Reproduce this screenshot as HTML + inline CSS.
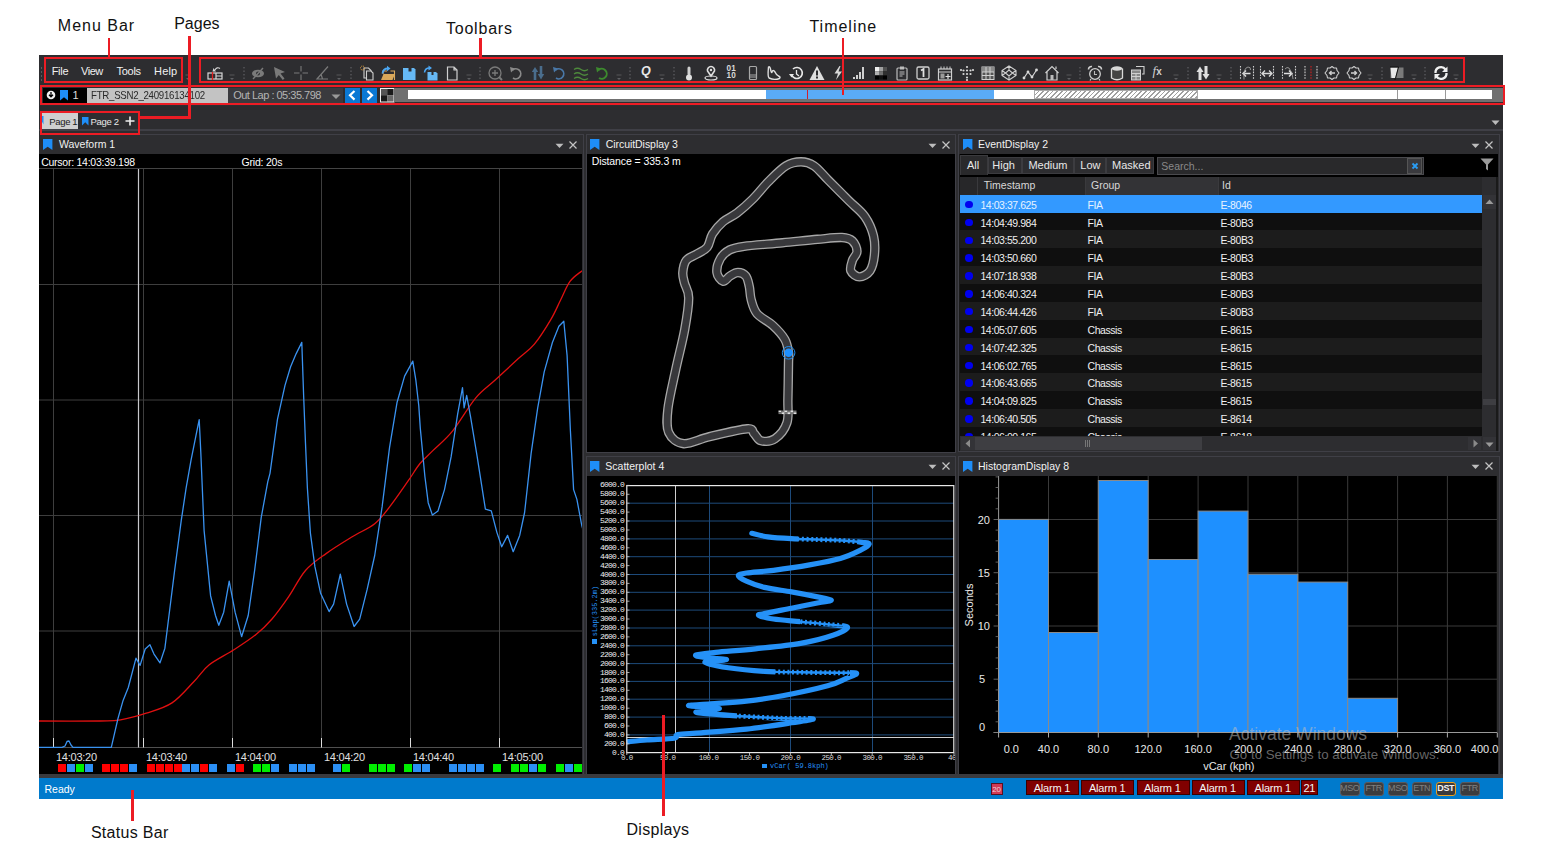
<!DOCTYPE html><html><head><meta charset="utf-8"><style>
html,body{margin:0;padding:0}
body{width:1551px;height:857px;position:relative;overflow:hidden;background:#fff;font-family:"Liberation Sans",sans-serif}
.t{position:absolute;white-space:nowrap}
.r{position:absolute;box-sizing:border-box}
svg{position:absolute;overflow:visible}
</style></head><body>
<div class="r" style="left:39.0px;top:55.0px;width:1464.0px;height:744.0px;background:#2d2d30"></div>
<div class="r" style="left:40.5px;top:67.0px;width:1.5px;height:1.5px;background:#5a5a5e"></div>
<div class="r" style="left:40.5px;top:71.0px;width:1.5px;height:1.5px;background:#5a5a5e"></div>
<div class="r" style="left:40.5px;top:75.0px;width:1.5px;height:1.5px;background:#5a5a5e"></div>
<div class="r" style="left:40.5px;top:79.0px;width:1.5px;height:1.5px;background:#5a5a5e"></div>
<div class="t" style="left:51.7px;top:65.9px;font-size:11px;line-height:11px;color:#f1f1f1;letter-spacing:-0.3px">File</div>
<div class="t" style="left:81.1px;top:65.9px;font-size:11px;line-height:11px;color:#f1f1f1;letter-spacing:-0.5px">View</div>
<div class="t" style="left:116.6px;top:65.9px;font-size:11px;line-height:11px;color:#f1f1f1;letter-spacing:-0.3px">Tools</div>
<div class="t" style="left:154.0px;top:65.9px;font-size:11px;line-height:11px;color:#f1f1f1;letter-spacing:0.2px">Help</div>
<svg style="left:207.0px;top:65.0px" width="16" height="16" viewBox="0 0 16 16"><rect x="1" y="8" width="14" height="6" fill="none" stroke="#d8d8d8" stroke-width="1.2"/><path d="M9,8 V14 M9,11 H15" stroke="#d8d8d8" stroke-width="1.2"/><path d="M5.5,7 V15" stroke="#e02020" stroke-width="1.3"/><path d="M8,5 Q10,1.5 13,3.5" fill="none" stroke="#d8d8d8" stroke-width="1.1"/><path d="M6.5,3 L9,6.5 L5.5,6.5 Z" fill="#d8d8d8"/></svg>
<svg style="left:223.6px;top:65.0px" width="16" height="16" viewBox="0 0 16 16"><path d="M5.5,10 H10.5" stroke="#5f5f62" stroke-width="0.8"/><path d="M6,13 H10 L8,15 Z" fill="#5f5f62"/></svg>
<svg style="left:235.5px;top:65.0px" width="16" height="16" viewBox="0 0 16 16"><rect x="7.4" y="2" width="1.2" height="1.4" fill="#606064"/><rect x="7.4" y="5.5" width="1.2" height="1.4" fill="#606064"/><rect x="7.4" y="9" width="1.2" height="1.4" fill="#606064"/><rect x="7.4" y="12.5" width="1.2" height="1.4" fill="#606064"/></svg>
<svg style="left:250.4px;top:65.0px" width="16" height="16" viewBox="0 0 16 16"><ellipse cx="8" cy="8.5" rx="6" ry="3.8" fill="#7a7a7a"/><ellipse cx="8" cy="8.5" rx="2" ry="2" fill="#2d2d30"/><path d="M3,14 L13,3" stroke="#7a7a7a" stroke-width="1.4"/></svg>
<svg style="left:272.1px;top:65.0px" width="16" height="16" viewBox="0 0 16 16"><path d="M2,2 L13,7 L8.5,8.5 L12.5,13.5 L10.8,15 L6.8,10 L4,13.5 Z" fill="#7a7a7a"/></svg>
<svg style="left:293.3px;top:65.0px" width="16" height="16" viewBox="0 0 16 16"><path d="M8,1 V15 M1,8 H15" stroke="#7a7a7a" stroke-width="1.1"/><rect x="6.5" y="6.5" width="3" height="3" fill="#2d2d30"/></svg>
<svg style="left:314.9px;top:65.0px" width="16" height="16" viewBox="0 0 16 16"><path d="M13,1.5 L2,14 H13 M6,9 L7.5,14" fill="none" stroke="#7a7a7a" stroke-width="1.2"/></svg>
<svg style="left:331.4px;top:65.0px" width="16" height="16" viewBox="0 0 16 16"><path d="M5.5,10 H10.5" stroke="#5f5f62" stroke-width="0.8"/><path d="M6,13 H10 L8,15 Z" fill="#5f5f62"/></svg>
<svg style="left:342.8px;top:65.0px" width="16" height="16" viewBox="0 0 16 16"><rect x="7.4" y="2" width="1.2" height="1.4" fill="#606064"/><rect x="7.4" y="5.5" width="1.2" height="1.4" fill="#606064"/><rect x="7.4" y="9" width="1.2" height="1.4" fill="#606064"/><rect x="7.4" y="12.5" width="1.2" height="1.4" fill="#606064"/></svg>
<svg style="left:358.5px;top:65.0px" width="16" height="16" viewBox="0 0 16 16"><path d="M5,3 H9.5 L12,5.5 V13 H5 Z" fill="none" stroke="#cfcfcf" stroke-width="1.1"/><path d="M7.5,6 H12 L14,8 V15 H7.5 Z" fill="#2d2d30" stroke="#cfcfcf" stroke-width="1.1"/><circle cx="3.5" cy="3" r="2" fill="none" stroke="#e0a040" stroke-width="1" stroke-dasharray="1 0.8"/></svg>
<svg style="left:379.7px;top:65.0px" width="16" height="16" viewBox="0 0 16 16"><path d="M1,15 L3.5,9 H15 L12.5,15 Z" fill="#d9a85a"/><path d="M3,9 V6 H7 M10.5,6 H14.5 V15" fill="none" stroke="#d9a85a" stroke-width="1.1"/><path d="M2.5,8.5 Q3,3.5 8,3.5" fill="none" stroke="#4ba6f2" stroke-width="1.8"/><path d="M7,0.8 L10.5,3.5 L7,6.2 Z" fill="#4ba6f2"/></svg>
<svg style="left:400.8px;top:65.0px" width="16" height="16" viewBox="0 0 16 16"><path d="M2,3 H13 L14.5,4.5 V15 H2 Z" fill="#66b8f4"/><rect x="7.5" y="3" width="3" height="3.5" fill="#2d2d30"/></svg>
<svg style="left:422.5px;top:65.0px" width="16" height="16" viewBox="0 0 16 16"><path d="M4.5,7 H13 L14.5,8.5 V15.5 H4.5 Z" fill="#66b8f4"/><rect x="8.5" y="7" width="2" height="3" fill="#2d2d30"/><path d="M1.5,7.5 Q2,3 6.5,3" fill="none" stroke="#4ba6f2" stroke-width="1.6"/><path d="M5.5,0.5 L9,3 L5.5,5.5 Z" fill="#4ba6f2"/></svg>
<svg style="left:443.6px;top:65.0px" width="16" height="16" viewBox="0 0 16 16"><path d="M3.5,2 H10 L13,5 V15 H3.5 Z M10,2 V5 H13" fill="none" stroke="#cfcfcf" stroke-width="1.2"/></svg>
<svg style="left:460.7px;top:65.0px" width="16" height="16" viewBox="0 0 16 16"><path d="M5.5,10 H10.5" stroke="#5f5f62" stroke-width="0.8"/><path d="M6,13 H10 L8,15 Z" fill="#5f5f62"/></svg>
<svg style="left:472.0px;top:65.0px" width="16" height="16" viewBox="0 0 16 16"><rect x="7.4" y="2" width="1.2" height="1.4" fill="#606064"/><rect x="7.4" y="5.5" width="1.2" height="1.4" fill="#606064"/><rect x="7.4" y="9" width="1.2" height="1.4" fill="#606064"/><rect x="7.4" y="12.5" width="1.2" height="1.4" fill="#606064"/></svg>
<svg style="left:487.0px;top:65.0px" width="16" height="16" viewBox="0 0 16 16"><circle cx="8" cy="8" r="6" fill="none" stroke="#7a7a7a" stroke-width="1.3"/><path d="M8,5 V11 M5,8 H11" stroke="#7a7a7a" stroke-width="1.3"/><path d="M12,12 L15,15" stroke="#7a7a7a" stroke-width="2"/></svg>
<svg style="left:508.4px;top:65.0px" width="16" height="16" viewBox="0 0 16 16"><path d="M4.5,5 A5,5 0 1 1 5,13" fill="none" stroke="#8a8a8a" stroke-width="1.7"/><path d="M2,2 L7,3.5 L3,7.5 Z" fill="#8a8a8a"/></svg>
<svg style="left:530.0px;top:65.0px" width="16" height="16" viewBox="0 0 16 16"><path d="M5,15 V6" stroke="#4a6d8c" stroke-width="2.6"/><path d="M1.8,7 L5,2 L8.2,7 Z" fill="#4a6d8c"/><path d="M11,1 V10" stroke="#4a6d8c" stroke-width="2.6"/><path d="M7.8,9 L11,14.5 L14.2,9 Z" fill="#4a6d8c"/></svg>
<svg style="left:551.2px;top:65.0px" width="16" height="16" viewBox="0 0 16 16"><path d="M4.5,5 A5,5 0 1 1 5,13" fill="none" stroke="#4a78a8" stroke-width="1.7"/><path d="M2,2 L7,3.5 L3,7.5 Z" fill="#4a78a8"/></svg>
<svg style="left:572.9px;top:65.0px" width="16" height="16" viewBox="0 0 16 16"><path d="M1,4.5 Q4.5,2 8,4.5 T15,4.5 M1,9 Q4.5,6.5 8,9 T15,9 M1,13.5 Q4.5,11 8,13.5 T15,13.5" fill="none" stroke="#4e8a3c" stroke-width="1.3"/></svg>
<svg style="left:594.0px;top:65.0px" width="16" height="16" viewBox="0 0 16 16"><path d="M4.5,5 A5,5 0 1 1 5,13" fill="none" stroke="#3d8a2e" stroke-width="1.9"/><path d="M2,2 L7,3.5 L3,7.5 Z" fill="#3d8a2e"/></svg>
<svg style="left:610.5px;top:65.0px" width="16" height="16" viewBox="0 0 16 16"><path d="M5.5,10 H10.5" stroke="#5f5f62" stroke-width="0.8"/><path d="M6,13 H10 L8,15 Z" fill="#5f5f62"/></svg>
<svg style="left:622.4px;top:65.0px" width="16" height="16" viewBox="0 0 16 16"><rect x="7.4" y="2" width="1.2" height="1.4" fill="#606064"/><rect x="7.4" y="5.5" width="1.2" height="1.4" fill="#606064"/><rect x="7.4" y="9" width="1.2" height="1.4" fill="#606064"/><rect x="7.4" y="12.5" width="1.2" height="1.4" fill="#606064"/></svg>
<div class="t" style="left:641px;top:65px;font-size:12.5px;line-height:12.5px;color:#e8e8e8;font-weight:bold;font-style:italic;font-family:'Liberation Sans',sans-serif">Q</div>
<svg style="left:653.9px;top:65.0px" width="16" height="16" viewBox="0 0 16 16"><path d="M5.5,10 H10.5" stroke="#5f5f62" stroke-width="0.8"/><path d="M6,13 H10 L8,15 Z" fill="#5f5f62"/></svg>
<svg style="left:666.0px;top:65.0px" width="16" height="16" viewBox="0 0 16 16"><rect x="7.4" y="2" width="1.2" height="1.4" fill="#606064"/><rect x="7.4" y="5.5" width="1.2" height="1.4" fill="#606064"/><rect x="7.4" y="9" width="1.2" height="1.4" fill="#606064"/><rect x="7.4" y="12.5" width="1.2" height="1.4" fill="#606064"/></svg>
<svg style="left:680.9px;top:65.0px" width="16" height="16" viewBox="0 0 16 16"><rect x="6.5" y="1.5" width="3" height="9" rx="1.5" fill="#d0d0d0"/><circle cx="8" cy="12.5" r="3" fill="#e0e0e0"/></svg>
<svg style="left:702.6px;top:65.0px" width="16" height="16" viewBox="0 0 16 16"><path d="M8,11 L4.5,6 A3.6,3.6 0 1 1 11.5,6 Z" fill="none" stroke="#e0e0e0" stroke-width="1.6"/><circle cx="8" cy="5" r="1.2" fill="#e0e0e0"/><ellipse cx="8" cy="13" rx="6" ry="2" fill="none" stroke="#e0e0e0" stroke-width="1.2"/></svg>
<div class="t" style="left:726.6px;top:66px;font-size:8.2px;line-height:6.8px;color:#d8d8d8;font-weight:bold;letter-spacing:0.2px">01<br>10</div>
<svg style="left:744.9px;top:65.0px" width="16" height="16" viewBox="0 0 16 16"><rect x="4.5" y="1.5" width="7" height="13" rx="1" fill="none" stroke="#a8a8a8" stroke-width="1.2"/><path d="M5,10 H11 M5,12 H11" stroke="#a8a8a8" stroke-width="1.2"/></svg>
<svg style="left:766.0px;top:65.0px" width="16" height="16" viewBox="0 0 16 16"><path d="M2.5,2 Q1.5,12 3,13 Q8,15.5 13.5,13.5 Q15,12 12.5,11 Q10,9.5 9,7 Q7,4 6,7 Q5.5,9 4.5,4 Q3.8,1 2.5,2 Z" fill="none" stroke="#e0e0e0" stroke-width="1.4"/></svg>
<svg style="left:788.2px;top:65.0px" width="16" height="16" viewBox="0 0 16 16"><path d="M3.5,9.5 A5.5,5.5 0 1 0 5,4" fill="none" stroke="#e8e8e8" stroke-width="1.7"/><path d="M1,9 L6,9 L3.5,12.5 Z" fill="#e8e8e8"/><path d="M8.5,5 V9 L11,11" fill="none" stroke="#e8e8e8" stroke-width="1.3"/></svg>
<svg style="left:808.9px;top:65.0px" width="16" height="16" viewBox="0 0 16 16"><path d="M8,1 L15.5,15 H0.5 Z" fill="#dedede"/><rect x="7" y="5.5" width="2" height="5" fill="#2d2d30"/><rect x="7" y="11.5" width="2" height="2" fill="#2d2d30"/></svg>
<svg style="left:830.2px;top:65.0px" width="16" height="16" viewBox="0 0 16 16"><path d="M9.5,1 L4.5,8.5 H8 L6,15 L12,6.5 H8.5 L10.5,1 Z" fill="#d8d8d8"/></svg>
<svg style="left:851.4px;top:65.0px" width="16" height="16" viewBox="0 0 16 16"><rect x="2" y="12" width="2" height="2" fill="#d0d0d0"/><rect x="5" y="10" width="2" height="4" fill="#d0d0d0"/><rect x="8" y="7" width="2" height="7" fill="#d0d0d0"/><rect x="11" y="2" width="2" height="12" fill="#d0d0d0"/></svg>
<svg style="left:873.0px;top:65.0px" width="16" height="16" viewBox="0 0 16 16"><rect x="2" y="2.0" width="4" height="4.2" fill="#f0f0f0"/><rect x="6" y="2.0" width="4" height="4.2" fill="#a0a0a0"/><rect x="10" y="2.0" width="4" height="4.2" fill="#505050"/><rect x="2" y="6.2" width="4" height="4.2" fill="#b0b0b0"/><rect x="6" y="6.2" width="4" height="4.2" fill="#707070"/><rect x="10" y="6.2" width="4" height="4.2" fill="#303030"/><rect x="2" y="10.4" width="4" height="4.2" fill="#000"/><rect x="6" y="10.4" width="4" height="4.2" fill="#101010"/><rect x="10" y="10.4" width="4" height="4.2" fill="#000"/></svg>
<svg style="left:894.2px;top:65.0px" width="16" height="16" viewBox="0 0 16 16"><rect x="3" y="3" width="10" height="12" rx="1" fill="none" stroke="#bcbcbc" stroke-width="1.2"/><rect x="6" y="1.5" width="4" height="3" fill="#bcbcbc"/><path d="M5.5,7 H10.5 M5.5,9 H10.5 M5.5,11 H8.5" stroke="#bcbcbc" stroke-width="1"/></svg>
<svg style="left:915.4px;top:65.0px" width="16" height="16" viewBox="0 0 16 16"><rect x="2" y="2" width="12" height="12" rx="1.5" fill="none" stroke="#cfcfcf" stroke-width="1.3"/><path d="M6,5.5 L8.5,4 V12" fill="none" stroke="#e0e0e0" stroke-width="1.8"/></svg>
<svg style="left:937.0px;top:65.0px" width="16" height="16" viewBox="0 0 16 16"><rect x="1.5" y="4" width="13" height="11" fill="none" stroke="#cfcfcf" stroke-width="1.2"/><path d="M1.5,7 H14.5" stroke="#cfcfcf" stroke-width="1"/><path d="M4,1.5 V4 M7,1.5 V4 M10,1.5 V4 M13,1.5 V4" stroke="#cfcfcf" stroke-width="1"/><rect x="3.5" y="8.5" width="4" height="5" fill="#9a9a9a"/><path d="M11,9 V14 M8.5,11.5 H13.5" stroke="#e0e0e0" stroke-width="1.2"/></svg>
<svg style="left:958.7px;top:65.0px" width="16" height="16" viewBox="0 0 16 16"><circle cx="8" cy="2" r="1.1" fill="#d8d8d8"/><circle cx="8" cy="5.5" r="1.1" fill="#d8d8d8"/><circle cx="8" cy="9" r="1.1" fill="#d8d8d8"/><circle cx="8" cy="12.5" r="1.1" fill="#d8d8d8"/><circle cx="8" cy="15" r="1.1" fill="#d8d8d8"/><circle cx="4.5" cy="5.5" r="1.1" fill="#d8d8d8"/><circle cx="11.5" cy="5.5" r="1.1" fill="#d8d8d8"/><circle cx="2" cy="5" r="1.1" fill="#d8d8d8"/><circle cx="14" cy="5" r="1.1" fill="#d8d8d8"/><circle cx="4.5" cy="9" r="1.1" fill="#d8d8d8"/><circle cx="11.5" cy="9" r="1.1" fill="#d8d8d8"/></svg>
<svg style="left:979.5px;top:65.0px" width="16" height="16" viewBox="0 0 16 16"><rect x="2" y="2" width="12" height="12.5" fill="#555" stroke="#cfcfcf" stroke-width="1"/><rect x="2" y="2" width="12" height="5" fill="#8a8a8a"/><path d="M6,2 V14.5 M10,2 V14.5 M2,7 H14 M2,10.5 H14" stroke="#d0d0d0" stroke-width="1"/></svg>
<svg style="left:1001.2px;top:65.0px" width="16" height="16" viewBox="0 0 16 16"><path d="M8,1 L15,5.5 V10.5 L8,15 L1,10.5 V5.5 Z M8,5 L11.5,8 L8,11 L4.5,8 Z M8,1 V5 M15,5.5 L11.5,8 M15,10.5 L11.5,8 M8,15 V11 M1,10.5 L4.5,8 M1,5.5 L4.5,8" fill="none" stroke="#cfcfcf" stroke-width="1.1"/></svg>
<svg style="left:1022.4px;top:65.0px" width="16" height="16" viewBox="0 0 16 16"><path d="M2,13 L6,7 L10,12 L14.5,5" fill="none" stroke="#d8d8d8" stroke-width="1.1"/><circle cx="2" cy="13" r="1.4" fill="#d8d8d8"/><circle cx="6" cy="7" r="1.4" fill="#d8d8d8"/><circle cx="10" cy="12" r="1.4" fill="#d8d8d8"/><circle cx="14.5" cy="5" r="1.4" fill="#d8d8d8"/></svg>
<svg style="left:1044.0px;top:65.0px" width="16" height="16" viewBox="0 0 16 16"><path d="M1.5,8 L8,1.5 L14.5,8 M3,7 V15 H13 V7 M12,4 V1.5" fill="none" stroke="#cfcfcf" stroke-width="1.2"/><rect x="6.5" y="10" width="3" height="5" fill="#bbb"/></svg>
<svg style="left:1060.6px;top:65.0px" width="16" height="16" viewBox="0 0 16 16"><path d="M5.5,10 H10.5" stroke="#5f5f62" stroke-width="0.8"/><path d="M6,13 H10 L8,15 Z" fill="#5f5f62"/></svg>
<svg style="left:1072.2px;top:65.0px" width="16" height="16" viewBox="0 0 16 16"><rect x="7.4" y="2" width="1.2" height="1.4" fill="#606064"/><rect x="7.4" y="5.5" width="1.2" height="1.4" fill="#606064"/><rect x="7.4" y="9" width="1.2" height="1.4" fill="#606064"/><rect x="7.4" y="12.5" width="1.2" height="1.4" fill="#606064"/></svg>
<svg style="left:1087.4px;top:65.0px" width="16" height="16" viewBox="0 0 16 16"><circle cx="8" cy="9" r="5.3" fill="none" stroke="#d0d0d0" stroke-width="1.3"/><path d="M1.5,4.5 A3,3 0 0 1 5,1.5 M11,1.5 A3,3 0 0 1 14.5,4.5" fill="none" stroke="#d0d0d0" stroke-width="1.6"/><path d="M7.5,6 V9.5 H10" fill="none" stroke="#bbb" stroke-width="1.1"/><path d="M4,14 L3,15.5 M12,14 L13,15.5" stroke="#d0d0d0" stroke-width="1.2"/></svg>
<svg style="left:1108.5px;top:65.0px" width="16" height="16" viewBox="0 0 16 16"><path d="M2.5,3.5 V13 Q8,16.5 13.5,13 V3.5" fill="#444" stroke="#d8d8d8" stroke-width="1.3"/><ellipse cx="8" cy="3.5" rx="5.5" ry="2.2" fill="#d8d8d8"/></svg>
<svg style="left:1129.9px;top:65.0px" width="16" height="16" viewBox="0 0 16 16"><path d="M6,1.5 H14 V9 H12" fill="none" stroke="#d0d0d0" stroke-width="1.1"/><rect x="1.5" y="5" width="9" height="10" fill="#888" stroke="#d0d0d0" stroke-width="1"/><path d="M1.5,8.5 H10.5 M1.5,11.5 H10.5 M6,8.5 V15" stroke="#d0d0d0" stroke-width="1"/></svg>
<div class="t" style="left:1152.5px;top:64px;font-size:13px;line-height:13px;color:#d0d0d0;font-style:italic;font-family:'Liberation Serif',serif">f<span style="font-size:10px;font-style:normal;font-family:'Liberation Sans',sans-serif;font-weight:bold">x</span></div>
<svg style="left:1167.6px;top:65.0px" width="16" height="16" viewBox="0 0 16 16"><path d="M5.5,10 H10.5" stroke="#5f5f62" stroke-width="0.8"/><path d="M6,13 H10 L8,15 Z" fill="#5f5f62"/></svg>
<svg style="left:1180.0px;top:65.0px" width="16" height="16" viewBox="0 0 16 16"><rect x="7.4" y="2" width="1.2" height="1.4" fill="#606064"/><rect x="7.4" y="5.5" width="1.2" height="1.4" fill="#606064"/><rect x="7.4" y="9" width="1.2" height="1.4" fill="#606064"/><rect x="7.4" y="12.5" width="1.2" height="1.4" fill="#606064"/></svg>
<svg style="left:1194.9px;top:65.0px" width="16" height="16" viewBox="0 0 16 16"><path d="M5,15 V6" stroke="#e0e0e0" stroke-width="3"/><path d="M1.5,7 L5,1.5 L8.5,7 Z" fill="#e0e0e0"/><path d="M11,1 V10" stroke="#e0e0e0" stroke-width="3"/><path d="M7.5,9 L11,14.5 L14.5,9 Z" fill="#e0e0e0"/></svg>
<svg style="left:1211.4px;top:65.0px" width="16" height="16" viewBox="0 0 16 16"><path d="M5.5,10 H10.5" stroke="#5f5f62" stroke-width="0.8"/><path d="M6,13 H10 L8,15 Z" fill="#5f5f62"/></svg>
<svg style="left:1223.3px;top:65.0px" width="16" height="16" viewBox="0 0 16 16"><rect x="7.4" y="2" width="1.2" height="1.4" fill="#606064"/><rect x="7.4" y="5.5" width="1.2" height="1.4" fill="#606064"/><rect x="7.4" y="9" width="1.2" height="1.4" fill="#606064"/><rect x="7.4" y="12.5" width="1.2" height="1.4" fill="#606064"/></svg>
<svg style="left:1238.8px;top:65.0px" width="16" height="16" viewBox="0 0 16 16"><path d="M1.5,1 V15 M14.5,1 V15" stroke="#d0d0d0" stroke-width="1.1" stroke-dasharray="1.6 1.2"/><path d="M4,8.5 H11.5 M7,5.5 L4,8.5 L7,11.5" fill="none" stroke="#e0e0e0" stroke-width="1.5"/><path d="M5,14.5 Q4,3 9,2 Q12,2 11.5,5" fill="none" stroke="#aaa" stroke-width="0.8"/></svg>
<svg style="left:1259.4px;top:65.0px" width="16" height="16" viewBox="0 0 16 16"><path d="M1.5,1 V15 M14.5,1 V15" stroke="#d0d0d0" stroke-width="1.1" stroke-dasharray="1.6 1.2"/><path d="M3,8.5 H13 M6,5.5 L3,8.5 L6,11.5 M10,5.5 L13,8.5 L10,11.5" fill="none" stroke="#d8d8d8" stroke-width="1.3"/></svg>
<svg style="left:1281.2px;top:65.0px" width="16" height="16" viewBox="0 0 16 16"><path d="M1.5,1 V15 M14.5,1 V15" stroke="#d0d0d0" stroke-width="1.1" stroke-dasharray="1.6 1.2"/><path d="M3,8.5 H11 M8,5.5 L11,8.5 L8,11.5" fill="none" stroke="#e0e0e0" stroke-width="1.5"/><path d="M4,4 Q6,1.5 8,3 Q12,8 12,14" fill="none" stroke="#aaa" stroke-width="0.8"/></svg>
<svg style="left:1302.6px;top:65.0px" width="16" height="16" viewBox="0 0 16 16"><path d="M2,1 V15 M14,1 V15" stroke="#d0d0d0" stroke-width="1.1" stroke-dasharray="1.6 1.2"/><path d="M8,1 V15" stroke="#d02020" stroke-width="1.1" stroke-dasharray="1.6 1.2"/></svg>
<svg style="left:1323.5px;top:65.0px" width="16" height="16" viewBox="0 0 16 16"><path d="M8,1.5 L10,3 L12.5,3 L13,5.5 L15,8 L13,10.5 L12.5,13 L10,13 L8,14.5 L6,13 L3.5,13 L3,10.5 L1,8 L3,5.5 L3.5,3 L6,3 Z" fill="none" stroke="#cfcfcf" stroke-width="1.1" stroke-linejoin="round"/><path d="M11,8 H5.5 M7.5,6 L5.5,8 L7.5,10" fill="none" stroke="#cfcfcf" stroke-width="1.4"/></svg>
<svg style="left:1345.5px;top:65.0px" width="16" height="16" viewBox="0 0 16 16"><path d="M8,1.5 L10,3 L12.5,3 L13,5.5 L15,8 L13,10.5 L12.5,13 L10,13 L8,14.5 L6,13 L3.5,13 L3,10.5 L1,8 L3,5.5 L3.5,3 L6,3 Z" fill="none" stroke="#cfcfcf" stroke-width="1.1" stroke-linejoin="round"/><path d="M5,8 H10.5 M8.5,6 L10.5,8 L8.5,10" fill="none" stroke="#cfcfcf" stroke-width="1.4"/></svg>
<svg style="left:1362.0px;top:65.0px" width="16" height="16" viewBox="0 0 16 16"><path d="M5.5,10 H10.5" stroke="#5f5f62" stroke-width="0.8"/><path d="M6,13 H10 L8,15 Z" fill="#5f5f62"/></svg>
<svg style="left:1373.7px;top:65.0px" width="16" height="16" viewBox="0 0 16 16"><rect x="7.4" y="2" width="1.2" height="1.4" fill="#606064"/><rect x="7.4" y="5.5" width="1.2" height="1.4" fill="#606064"/><rect x="7.4" y="9" width="1.2" height="1.4" fill="#606064"/><rect x="7.4" y="12.5" width="1.2" height="1.4" fill="#606064"/></svg>
<svg style="left:1389.0px;top:65.0px" width="16" height="16" viewBox="0 0 16 16"><rect x="1.5" y="2.5" width="13" height="10.5" fill="#7a7a7a"/><path d="M1.5,2.5 H9 L6,13 H2.5 Z" fill="#e8e8e8"/><path d="M1,2 H9.5 L6.5,13.5 M6,13.5 V15" fill="none" stroke="#111" stroke-width="1"/></svg>
<svg style="left:1405.5px;top:65.0px" width="16" height="16" viewBox="0 0 16 16"><path d="M5.5,10 H10.5" stroke="#5f5f62" stroke-width="0.8"/><path d="M6,13 H10 L8,15 Z" fill="#5f5f62"/></svg>
<svg style="left:1417.2px;top:65.0px" width="16" height="16" viewBox="0 0 16 16"><rect x="7.4" y="2" width="1.2" height="1.4" fill="#606064"/><rect x="7.4" y="5.5" width="1.2" height="1.4" fill="#606064"/><rect x="7.4" y="9" width="1.2" height="1.4" fill="#606064"/><rect x="7.4" y="12.5" width="1.2" height="1.4" fill="#606064"/></svg>
<svg style="left:1432.5px;top:65.0px" width="16" height="16" viewBox="0 0 16 16"><path d="M2.5,8 A5.5,5.5 0 0 1 12.5,4.5" fill="none" stroke="#f0f0f0" stroke-width="2.3"/><path d="M14.5,1.5 V7 H9 Z" fill="#f0f0f0"/><path d="M13.5,8 A5.5,5.5 0 0 1 3.5,11.5" fill="none" stroke="#f0f0f0" stroke-width="2.3"/><path d="M1.5,14.5 V9 H7 Z" fill="#f0f0f0"/></svg>
<svg style="left:1448.4px;top:65.0px" width="16" height="16" viewBox="0 0 16 16"><path d="M5.5,10 H10.5" stroke="#5f5f62" stroke-width="0.8"/><path d="M6,13 H10 L8,15 Z" fill="#5f5f62"/></svg>
<svg style="left:179.5px;top:65.0px" width="16" height="16" viewBox="0 0 16 16"><path d="M5.5,10 H10.5" stroke="#5f5f62" stroke-width="0.8"/><path d="M6,13 H10 L8,15 Z" fill="#5f5f62"/></svg>
<div class="r" style="left:42.7px;top:88.0px;width:44.3px;height:14.7px;background:#000"></div>
<div class="r" style="left:87.0px;top:88.0px;width:141.0px;height:14.7px;background:#c3c3c3"></div>
<div class="t" style="left:90.8px;top:90.0px;font-size:11px;line-height:11px;color:#2a2a2a;letter-spacing:-0.3px;transform:scaleX(0.88);transform-origin:0 0">FTR_SSN2_240916134102</div>
<div class="r" style="left:228.0px;top:88.0px;width:115.0px;height:14.7px;background:#3a3a3e"></div>
<div class="t" style="left:233.2px;top:90.0px;font-size:11px;line-height:11px;color:#b4b4b4;letter-spacing:-0.5px">Out Lap : 05:35.798</div>
<svg style="left:42.8px;top:87.3px" width="16" height="16" viewBox="0 0 16 16"><circle cx="8" cy="8" r="4.3" fill="#f0f0f0"/><path d="M8,5 V9.8 M6,7.8 L8,9.8 L10,7.8" fill="none" stroke="#000" stroke-width="1.3"/></svg>
<svg style="left:60.4px;top:89.8px" width="8" height="10.5" viewBox="0 0 8 10.5"><path d="M0,0 H8 V10.5 L4.0,7.3 L0,10.5 Z" fill="#1e8ef8"/></svg>
<div class="t" style="left:72.5px;top:90.0px;font-size:11px;line-height:11px;color:#ddd">1</div>
<svg style="left:331px;top:93.5px" width="10" height="6"><path d="M0.5,0.5 H9.5 L5,5 Z" fill="#999"/></svg>
<div class="r" style="left:345.3px;top:88px;width:15px;height:14.5px;background:#0a78d4"></div>
<div class="r" style="left:362.2px;top:88px;width:14.5px;height:14.5px;background:#0a78d4"></div>
<svg style="left:345.3px;top:88px" width="15" height="15"><path d="M9.5,3 L5,7.3 L9.5,11.6" fill="none" stroke="#fff" stroke-width="2.2"/></svg>
<svg style="left:362.2px;top:88px" width="15" height="15"><path d="M5.5,3 L10,7.3 L5.5,11.6" fill="none" stroke="#fff" stroke-width="2.2"/></svg>
<svg style="left:379.6px;top:88px" width="14.5" height="14.5"><rect width="14.5" height="14.5" fill="#f0f0f0"/><rect x="1" y="1" width="6.2" height="6.2" fill="#555"/><rect x="7.2" y="1" width="6.3" height="6.2" fill="#1a1a1a"/><rect x="1" y="7.2" width="6.2" height="6.3" fill="#1a1a1a"/><rect x="7.2" y="7.2" width="6.3" height="6.3" fill="#6a6a6a"/></svg>
<div class="r" style="left:394.0px;top:88.0px;width:1109.0px;height:14.0px;background:#707070"></div>
<div class="r" style="left:407.6px;top:89.8px;width:1084.4px;height:9.3px;background:#fff"></div>
<div class="r" style="left:766.4px;top:89.8px;width:227.3px;height:9.3px;background:#5aabf7"></div>
<div class="r" style="left:807.0px;top:89.8px;width:1.0px;height:9.3px;background:#d02030"></div>
<div class="r" style="left:1034.3px;top:89.8px;width:163.9px;height:9.3px;background:repeating-linear-gradient(135deg,#fff 0 2.2px,#a0a0a0 2.2px 3.3px);border:1px solid #aaa"></div>
<div class="r" style="left:1397.0px;top:89.8px;width:1.2px;height:9.3px;background:#999"></div>
<div class="r" style="left:1445.0px;top:89.8px;width:1.2px;height:9.3px;background:#999"></div>
<div class="r" style="left:39.0px;top:105.6px;width:1464.0px;height:4.6px;background:#2a2a2d"></div>
<div class="r" style="left:42.4px;top:112.6px;width:35.6px;height:17.2px;background:#cfcfcf"></div>
<svg style="left:39.5px;top:116.0px" width="3.5" height="8.5" viewBox="0 0 3.5 8.5"><path d="M0,0 H3.5 V8.5 L1.75,5.3 L0,8.5 Z" fill="#1e8ef8"/></svg>
<div class="t" style="left:49.3px;top:116.8px;font-size:9.5px;line-height:9.5px;color:#1a1a1a;letter-spacing:-0.35px">Page 1</div>
<svg style="left:81.5px;top:116.5px" width="6.5" height="8.5" viewBox="0 0 6.5 8.5"><path d="M0,0 H6.5 V8.5 L3.25,5.3 L0,8.5 Z" fill="#1e8ef8"/></svg>
<div class="t" style="left:90.6px;top:116.8px;font-size:9.5px;line-height:9.5px;color:#e8e8e8;letter-spacing:-0.35px">Page 2</div>
<svg style="left:124.5px;top:115.5px" width="10" height="10"><path d="M5,0.5 V9.5 M0.5,5 H9.5" stroke="#eee" stroke-width="1.6"/></svg>
<svg style="left:1491px;top:119.5px" width="9" height="6"><path d="M0.5,0.5 H8.5 L4.5,5 Z" fill="#bbb"/></svg>
<div class="r" style="left:39.0px;top:129.2px;width:1464.0px;height:1.9px;background:#3f3f46"></div>
<div class="r" style="left:39.0px;top:134.0px;width:544.5px;height:641.0px;border:1.4px solid #3f3f46;background:#2d2d30"></div>
<div class="r" style="left:40.4px;top:153.7px;width:541.7px;height:620.1px;background:#000"></div>
<div class="r" style="left:39.0px;top:134.0px;width:1.4px;height:641.0px;background:#2d2d30"></div>
<div class="r" style="left:39.0px;top:153.7px;width:543.0px;height:620.3px;background:#000"></div>
<div class="r" style="left:586.0px;top:134.0px;width:370.4px;height:319.2px;border:1.4px solid #3f3f46;background:#2d2d30"></div>
<div class="r" style="left:587.4px;top:153.7px;width:367.6px;height:298.3px;background:#000"></div>
<div class="r" style="left:586.0px;top:456.3px;width:370.4px;height:318.7px;border:1.4px solid #3f3f46;background:#2d2d30"></div>
<div class="r" style="left:587.4px;top:475.9px;width:367.6px;height:297.9px;background:#000"></div>
<div class="r" style="left:958.0px;top:134.0px;width:541.6px;height:318.2px;border:1.4px solid #3f3f46;background:#2d2d30"></div>
<div class="r" style="left:959.4px;top:154.0px;width:538.8px;height:297.0px;background:#1a1a1a"></div>
<div class="r" style="left:958.0px;top:456.3px;width:541.6px;height:318.7px;border:1.4px solid #3f3f46;background:#2d2d30"></div>
<div class="r" style="left:959.4px;top:475.9px;width:538.8px;height:297.9px;background:#000"></div>
<div class="r" style="left:39.0px;top:774.0px;width:1464.0px;height:4.0px;background:#3a3a3e"></div>
<div class="t" style="left:59.0px;top:138.7px;font-size:10.5px;line-height:10.5px;color:#f1f1f1;">Waveform 1</div>
<div class="t" style="left:41.2px;top:156.9px;font-size:10.5px;line-height:10.5px;color:#fff;letter-spacing:-0.25px">Cursor: 14:03:39.198</div>
<div class="t" style="left:241.5px;top:156.9px;font-size:10.5px;line-height:10.5px;color:#fff;letter-spacing:-0.2px">Grid: 20s</div>
<div class="t" style="left:605.7px;top:138.7px;font-size:10.5px;line-height:10.5px;color:#f1f1f1;letter-spacing:-0.05px">CircuitDisplay 3</div>
<div class="t" style="left:591.7px;top:155.7px;font-size:10.5px;line-height:10.5px;color:#fff;letter-spacing:-0.1px">Distance = 335.3 m</div>
<div class="t" style="left:605.3px;top:460.7px;font-size:10.5px;line-height:10.5px;color:#f1f1f1;">Scatterplot 4</div>
<div class="t" style="left:978.0px;top:138.7px;font-size:10.5px;line-height:10.5px;color:#f1f1f1;">EventDisplay 2</div>
<div class="t" style="left:978.0px;top:460.7px;font-size:10.5px;line-height:10.5px;color:#f1f1f1;">HistogramDisplay 8</div>
<svg style="left:0;top:0" width="1551" height="857" viewBox="0 0 1551 857">
<defs><clipPath id="wclip"><rect x="39" y="169" width="543" height="579"/></clipPath></defs>
<line x1="53.5" y1="169" x2="53.5" y2="747.5" stroke="#3e3e3e" stroke-width="1"/>
<line x1="143.5" y1="169" x2="143.5" y2="747.5" stroke="#3e3e3e" stroke-width="1"/>
<line x1="232.5" y1="169" x2="232.5" y2="747.5" stroke="#3e3e3e" stroke-width="1"/>
<line x1="321.5" y1="169" x2="321.5" y2="747.5" stroke="#3e3e3e" stroke-width="1"/>
<line x1="410.5" y1="169" x2="410.5" y2="747.5" stroke="#3e3e3e" stroke-width="1"/>
<line x1="499.5" y1="169" x2="499.5" y2="747.5" stroke="#3e3e3e" stroke-width="1"/>
<line x1="39" y1="284.5" x2="582" y2="284.5" stroke="#3e3e3e" stroke-width="1"/>
<line x1="39" y1="400" x2="582" y2="400" stroke="#3e3e3e" stroke-width="1"/>
<line x1="39" y1="515.5" x2="582" y2="515.5" stroke="#3e3e3e" stroke-width="1"/>
<line x1="39" y1="631" x2="582" y2="631" stroke="#3e3e3e" stroke-width="1"/>
<line x1="39" y1="168.5" x2="582" y2="168.5" stroke="#444" stroke-width="1"/>
<line x1="39" y1="747.5" x2="582" y2="747.5" stroke="#505050" stroke-width="1"/>
<line x1="53.5" y1="738" x2="53.5" y2="747.5" stroke="#ddd" stroke-width="1"/>
<line x1="143.5" y1="738" x2="143.5" y2="747.5" stroke="#ddd" stroke-width="1"/>
<line x1="232.5" y1="738" x2="232.5" y2="747.5" stroke="#ddd" stroke-width="1"/>
<line x1="321.5" y1="738" x2="321.5" y2="747.5" stroke="#ddd" stroke-width="1"/>
<line x1="410.5" y1="738" x2="410.5" y2="747.5" stroke="#ddd" stroke-width="1"/>
<line x1="499.5" y1="738" x2="499.5" y2="747.5" stroke="#ddd" stroke-width="1"/>
<line x1="138.5" y1="169" x2="138.5" y2="747.5" stroke="#c8c8cc" stroke-width="1.2"/>
<g clip-path="url(#wclip)"><path d="M39.00,721.00 C49.17,721.00 86.40,721.18 100.00,721.00 C113.60,720.82 112.88,721.20 120.60,719.90 C128.32,718.60 137.73,716.03 146.30,713.20 C154.87,710.37 164.05,708.18 172.00,702.90 C179.95,697.62 187.83,687.82 194.00,681.50 C200.17,675.18 202.42,670.25 209.00,665.00 C215.58,659.75 225.67,655.08 233.50,650.00 C241.33,644.92 249.58,639.67 256.00,634.50 C262.42,629.33 266.55,625.32 272.00,619.00 C277.45,612.68 283.12,604.68 288.70,596.60 C294.28,588.52 299.27,577.67 305.50,570.50 C311.73,563.33 318.32,559.22 326.10,553.60 C333.88,547.98 344.10,541.78 352.20,536.80 C360.30,531.82 368.47,528.68 374.70,523.70 C380.93,518.72 384.00,514.07 389.60,506.90 C395.20,499.73 403.23,487.93 408.30,480.70 C413.37,473.47 415.87,468.55 420.00,463.50 C424.13,458.45 427.65,455.85 433.10,450.40 C438.55,444.95 445.62,439.52 452.70,430.80 C459.78,422.08 468.52,406.55 475.60,398.10 C482.68,389.65 488.12,386.65 495.20,380.10 C502.28,373.55 511.57,364.80 518.10,358.80 C524.63,352.80 528.95,350.63 534.40,344.10 C539.85,337.57 546.43,326.95 550.80,319.60 C555.17,312.25 557.40,306.37 560.60,300.00 C563.80,293.63 566.43,286.27 570.00,281.40 C573.57,276.53 580.00,272.57 582.00,270.80" fill="none" stroke="#e01010" stroke-width="1.3"/>
<polyline points="39.0,747.4 62.0,747.4 65.0,746.0 67.0,741.5 69.0,741.0 71.0,745.0 73.0,747.4 111.3,747.4 118.0,718.4 123.1,700.4 128.3,687.5 136.0,658.2 140.1,665.4 145.2,649.0 149.9,644.8 154.0,654.1 160.0,662.9 164.9,648.2 169.8,609.0 174.7,569.8 181.2,520.8 186.1,488.2 191.0,460.4 195.9,435.9 199.2,419.6 200.8,452.2 204.1,530.6 210.6,595.9 215.5,615.5 218.8,625.3 223.7,612.2 229.2,581.2 235.1,612.2 241.6,636.7 248.2,615.5 254.7,569.8 261.2,517.6 267.8,481.6 270.0,473.3 277.5,419.1 285.0,385.4 290.6,366.7 296.2,353.6 301.8,342.4 303.6,394.8 305.5,443.4 307.4,488.2 310.4,533.1 314.9,566.7 320.5,592.9 329.1,611.6 333.6,604.1 340.3,574.2 346.6,604.1 354.1,626.5 359.7,619.1 367.2,589.2 374.7,555.5 382.1,506.9 389.6,447.1 397.1,402.2 404.6,376.1 412.8,361.1 415.8,379.8 418.8,406.0 420.3,428.4 424.9,476.5 428.2,502.7 432.4,515.1 438.0,510.9 444.5,489.6 451.1,456.9 457.6,414.4 462.5,387.6 464.1,407.9 466.7,395.5 470.7,417.7 477.2,456.9 485.4,509.2 491.3,510.9 496.8,532.1 501.7,546.8 507.6,535.4 513.2,551.7 519.7,535.4 524.6,512.5 531.1,453.6 537.7,407.9 544.2,371.9 552.4,342.5 558.9,326.2 563.8,321.2 567.1,355.6 570.4,430.8 573.6,489.6 576.9,499.4 581.8,525.6 583.0,530.0" fill="none" stroke="#3a92f0" stroke-width="1.3" stroke-linejoin="round"/></g>
</svg>
<div class="t" style="left:56.0px;top:751.7px;font-size:11px;line-height:11px;color:#e0e0e0;letter-spacing:-0.25px">14:03:20</div>
<div class="t" style="left:146.0px;top:751.7px;font-size:11px;line-height:11px;color:#e0e0e0;letter-spacing:-0.25px">14:03:40</div>
<div class="t" style="left:235.0px;top:751.7px;font-size:11px;line-height:11px;color:#e0e0e0;letter-spacing:-0.25px">14:04:00</div>
<div class="t" style="left:324.0px;top:751.7px;font-size:11px;line-height:11px;color:#e0e0e0;letter-spacing:-0.25px">14:04:20</div>
<div class="t" style="left:413.0px;top:751.7px;font-size:11px;line-height:11px;color:#e0e0e0;letter-spacing:-0.25px">14:04:40</div>
<div class="t" style="left:502.0px;top:751.7px;font-size:11px;line-height:11px;color:#e0e0e0;letter-spacing:-0.25px">14:05:00</div>
<div class="r" style="left:58px;top:764px;width:8px;height:8px;background:#ff0000"></div>
<div class="r" style="left:67px;top:764px;width:8px;height:8px;background:#2b8ff5"></div>
<div class="r" style="left:76px;top:764px;width:8px;height:8px;background:#00ee00"></div>
<div class="r" style="left:85px;top:764px;width:8px;height:8px;background:#2b8ff5"></div>
<div class="r" style="left:102px;top:764px;width:8px;height:8px;background:#ff0000"></div>
<div class="r" style="left:111px;top:764px;width:8px;height:8px;background:#ff0000"></div>
<div class="r" style="left:120px;top:764px;width:8px;height:8px;background:#ff0000"></div>
<div class="r" style="left:129px;top:764px;width:8px;height:8px;background:#2b8ff5"></div>
<div class="r" style="left:147px;top:764px;width:8px;height:8px;background:#ff0000"></div>
<div class="r" style="left:156px;top:764px;width:8px;height:8px;background:#ff0000"></div>
<div class="r" style="left:165px;top:764px;width:8px;height:8px;background:#ff0000"></div>
<div class="r" style="left:174px;top:764px;width:8px;height:8px;background:#ff0000"></div>
<div class="r" style="left:182px;top:764px;width:8px;height:8px;background:#2b8ff5"></div>
<div class="r" style="left:191px;top:764px;width:8px;height:8px;background:#2b8ff5"></div>
<div class="r" style="left:200px;top:764px;width:8px;height:8px;background:#ff0000"></div>
<div class="r" style="left:209px;top:764px;width:8px;height:8px;background:#2b8ff5"></div>
<div class="r" style="left:227px;top:764px;width:8px;height:8px;background:#2b8ff5"></div>
<div class="r" style="left:236px;top:764px;width:8px;height:8px;background:#ff0000"></div>
<div class="r" style="left:253px;top:764px;width:8px;height:8px;background:#00ee00"></div>
<div class="r" style="left:262px;top:764px;width:8px;height:8px;background:#00ee00"></div>
<div class="r" style="left:271px;top:764px;width:8px;height:8px;background:#2b8ff5"></div>
<div class="r" style="left:289px;top:764px;width:8px;height:8px;background:#2b8ff5"></div>
<div class="r" style="left:298px;top:764px;width:8px;height:8px;background:#2b8ff5"></div>
<div class="r" style="left:307px;top:764px;width:8px;height:8px;background:#2b8ff5"></div>
<div class="r" style="left:333px;top:764px;width:8px;height:8px;background:#2b8ff5"></div>
<div class="r" style="left:342px;top:764px;width:8px;height:8px;background:#00ee00"></div>
<div class="r" style="left:369px;top:764px;width:8px;height:8px;background:#00ee00"></div>
<div class="r" style="left:378px;top:764px;width:8px;height:8px;background:#00ee00"></div>
<div class="r" style="left:387px;top:764px;width:8px;height:8px;background:#00ee00"></div>
<div class="r" style="left:404px;top:764px;width:8px;height:8px;background:#00ee00"></div>
<div class="r" style="left:413px;top:764px;width:8px;height:8px;background:#2b8ff5"></div>
<div class="r" style="left:422px;top:764px;width:8px;height:8px;background:#2b8ff5"></div>
<div class="r" style="left:449px;top:764px;width:8px;height:8px;background:#2b8ff5"></div>
<div class="r" style="left:458px;top:764px;width:8px;height:8px;background:#2b8ff5"></div>
<div class="r" style="left:467px;top:764px;width:8px;height:8px;background:#2b8ff5"></div>
<div class="r" style="left:476px;top:764px;width:8px;height:8px;background:#2b8ff5"></div>
<div class="r" style="left:493px;top:764px;width:8px;height:8px;background:#00ee00"></div>
<div class="r" style="left:511px;top:764px;width:8px;height:8px;background:#00ee00"></div>
<div class="r" style="left:520px;top:764px;width:8px;height:8px;background:#00ee00"></div>
<div class="r" style="left:529px;top:764px;width:8px;height:8px;background:#2b8ff5"></div>
<div class="r" style="left:538px;top:764px;width:8px;height:8px;background:#00ee00"></div>
<div class="r" style="left:556px;top:764px;width:8px;height:8px;background:#00ee00"></div>
<div class="r" style="left:565px;top:764px;width:8px;height:8px;background:#2b8ff5"></div>
<div class="r" style="left:574px;top:764px;width:8px;height:8px;background:#00ee00"></div>
<svg style="left:0;top:0" width="1551" height="857" viewBox="0 0 1551 857">
<path d="M787.90,399.00 C787.63,408.92 789.05,416.18 786.90,422.80 C784.75,429.42 779.30,435.72 775.00,438.70 C770.70,441.68 764.58,441.53 761.10,440.70 C757.62,439.87 756.42,435.68 754.10,433.70 C751.78,431.72 754.63,428.30 747.20,428.80 C739.77,429.30 720.08,434.22 709.50,436.70 C698.92,439.18 690.48,444.37 683.70,443.70 C676.92,443.03 671.43,438.50 668.80,432.70 C666.17,426.90 666.73,419.47 667.90,408.90 C669.07,398.33 673.00,382.52 675.80,369.30 C678.60,356.08 682.55,341.50 684.70,329.60 C686.85,317.70 688.73,305.67 688.70,297.90 C688.67,290.13 685.48,287.23 684.50,283.00 C683.52,278.77 682.50,276.28 682.80,272.50 C683.10,268.72 683.97,263.37 686.30,260.30 C688.63,257.23 693.30,256.30 696.80,254.10 C700.30,251.90 704.68,250.45 707.30,247.10 C709.92,243.75 709.88,238.22 712.50,234.00 C715.12,229.78 718.92,225.30 723.00,221.80 C727.08,218.30 732.03,216.80 737.00,213.00 C741.97,209.20 747.55,204.25 752.80,199.00 C758.05,193.75 762.97,187.03 768.50,181.50 C774.03,175.97 780.58,169.08 786.00,165.80 C791.42,162.52 796.33,161.80 801.00,161.80 C805.67,161.80 809.50,162.80 814.00,165.80 C818.50,168.80 822.17,173.97 828.00,179.80 C833.83,185.63 842.87,194.68 849.00,200.80 C855.13,206.92 860.72,210.67 864.80,216.50 C868.88,222.33 871.90,229.38 873.50,235.80 C875.10,242.22 874.98,249.17 874.40,255.00 C873.82,260.83 872.48,267.15 870.00,270.80 C867.52,274.45 862.70,276.90 859.50,276.90 C856.30,276.90 851.97,273.57 850.80,270.80 C849.63,268.03 851.47,263.52 852.50,260.30 C853.53,257.08 857.00,254.72 857.00,251.50 C857.00,248.28 855.00,243.33 852.50,241.00 C850.00,238.67 847.83,237.78 842.00,237.50 C836.17,237.22 827.42,238.42 817.50,239.30 C807.58,240.18 794.75,241.63 782.50,242.80 C770.25,243.97 752.75,245.13 744.00,246.30 C735.25,247.47 733.93,247.77 730.00,249.80 C726.07,251.83 722.58,254.72 720.40,258.50 C718.22,262.28 716.47,268.70 716.90,272.50 C717.33,276.30 720.82,280.72 723.00,281.30 C725.18,281.88 727.52,277.47 730.00,276.00 C732.48,274.53 735.27,272.50 737.90,272.50 C740.53,272.50 743.90,273.67 745.80,276.00 C747.70,278.33 748.40,282.53 749.30,286.50 C750.20,290.47 749.90,295.27 751.20,299.80 C752.50,304.33 753.47,309.40 757.10,313.70 C760.73,318.00 768.37,321.30 773.00,325.60 C777.63,329.90 782.32,334.97 784.90,339.50 C787.48,344.03 787.90,348.83 788.50,352.80 C789.10,356.77 788.60,355.60 788.50,363.30 C788.40,371.00 788.17,389.08 787.90,399.00 Z" fill="none" stroke="#a8a8a8" stroke-width="9.4" stroke-linejoin="round"/>
<path d="M787.90,399.00 C787.63,408.92 789.05,416.18 786.90,422.80 C784.75,429.42 779.30,435.72 775.00,438.70 C770.70,441.68 764.58,441.53 761.10,440.70 C757.62,439.87 756.42,435.68 754.10,433.70 C751.78,431.72 754.63,428.30 747.20,428.80 C739.77,429.30 720.08,434.22 709.50,436.70 C698.92,439.18 690.48,444.37 683.70,443.70 C676.92,443.03 671.43,438.50 668.80,432.70 C666.17,426.90 666.73,419.47 667.90,408.90 C669.07,398.33 673.00,382.52 675.80,369.30 C678.60,356.08 682.55,341.50 684.70,329.60 C686.85,317.70 688.73,305.67 688.70,297.90 C688.67,290.13 685.48,287.23 684.50,283.00 C683.52,278.77 682.50,276.28 682.80,272.50 C683.10,268.72 683.97,263.37 686.30,260.30 C688.63,257.23 693.30,256.30 696.80,254.10 C700.30,251.90 704.68,250.45 707.30,247.10 C709.92,243.75 709.88,238.22 712.50,234.00 C715.12,229.78 718.92,225.30 723.00,221.80 C727.08,218.30 732.03,216.80 737.00,213.00 C741.97,209.20 747.55,204.25 752.80,199.00 C758.05,193.75 762.97,187.03 768.50,181.50 C774.03,175.97 780.58,169.08 786.00,165.80 C791.42,162.52 796.33,161.80 801.00,161.80 C805.67,161.80 809.50,162.80 814.00,165.80 C818.50,168.80 822.17,173.97 828.00,179.80 C833.83,185.63 842.87,194.68 849.00,200.80 C855.13,206.92 860.72,210.67 864.80,216.50 C868.88,222.33 871.90,229.38 873.50,235.80 C875.10,242.22 874.98,249.17 874.40,255.00 C873.82,260.83 872.48,267.15 870.00,270.80 C867.52,274.45 862.70,276.90 859.50,276.90 C856.30,276.90 851.97,273.57 850.80,270.80 C849.63,268.03 851.47,263.52 852.50,260.30 C853.53,257.08 857.00,254.72 857.00,251.50 C857.00,248.28 855.00,243.33 852.50,241.00 C850.00,238.67 847.83,237.78 842.00,237.50 C836.17,237.22 827.42,238.42 817.50,239.30 C807.58,240.18 794.75,241.63 782.50,242.80 C770.25,243.97 752.75,245.13 744.00,246.30 C735.25,247.47 733.93,247.77 730.00,249.80 C726.07,251.83 722.58,254.72 720.40,258.50 C718.22,262.28 716.47,268.70 716.90,272.50 C717.33,276.30 720.82,280.72 723.00,281.30 C725.18,281.88 727.52,277.47 730.00,276.00 C732.48,274.53 735.27,272.50 737.90,272.50 C740.53,272.50 743.90,273.67 745.80,276.00 C747.70,278.33 748.40,282.53 749.30,286.50 C750.20,290.47 749.90,295.27 751.20,299.80 C752.50,304.33 753.47,309.40 757.10,313.70 C760.73,318.00 768.37,321.30 773.00,325.60 C777.63,329.90 782.32,334.97 784.90,339.50 C787.48,344.03 787.90,348.83 788.50,352.80 C789.10,356.77 788.60,355.60 788.50,363.30 C788.40,371.00 788.17,389.08 787.90,399.00 Z" fill="none" stroke="#38383b" stroke-width="6.8" stroke-linejoin="round"/>
<rect x="778.5" y="410.5" width="3" height="1.8" fill="#e0e0e0"/>
<rect x="778.5" y="412.3" width="3" height="1.8" fill="#777"/>
<rect x="781.5" y="410.5" width="3" height="1.8" fill="#777"/>
<rect x="781.5" y="412.3" width="3" height="1.8" fill="#e0e0e0"/>
<rect x="784.5" y="410.5" width="3" height="1.8" fill="#e0e0e0"/>
<rect x="784.5" y="412.3" width="3" height="1.8" fill="#777"/>
<rect x="787.5" y="410.5" width="3" height="1.8" fill="#777"/>
<rect x="787.5" y="412.3" width="3" height="1.8" fill="#e0e0e0"/>
<rect x="790.5" y="410.5" width="3" height="1.8" fill="#e0e0e0"/>
<rect x="790.5" y="412.3" width="3" height="1.8" fill="#777"/>
<rect x="793.5" y="410.5" width="3" height="1.8" fill="#777"/>
<rect x="793.5" y="412.3" width="3" height="1.8" fill="#e0e0e0"/>
<circle cx="788.6" cy="352.8" r="6.3" fill="none" stroke="#1e8ef0" stroke-width="1"/>
<circle cx="788.6" cy="352.8" r="4.2" fill="#1e90ff"/>
</svg>
<svg style="left:0;top:0" width="1551" height="857" viewBox="0 0 1551 857">
<defs><clipPath id="sclip"><rect x="626.5" y="485.5" width="327.5" height="267"/></clipPath></defs>
<line x1="626.5" y1="503.2" x2="954" y2="503.2" stroke="#1d4a7a" stroke-width="1"/>
<line x1="626.5" y1="521.0" x2="954" y2="521.0" stroke="#1d4a7a" stroke-width="1"/>
<line x1="626.5" y1="538.9" x2="954" y2="538.9" stroke="#1d4a7a" stroke-width="1"/>
<line x1="626.5" y1="556.7" x2="954" y2="556.7" stroke="#1d4a7a" stroke-width="1"/>
<line x1="626.5" y1="574.5" x2="954" y2="574.5" stroke="#1d4a7a" stroke-width="1"/>
<line x1="626.5" y1="592.3" x2="954" y2="592.3" stroke="#1d4a7a" stroke-width="1"/>
<line x1="626.5" y1="610.1" x2="954" y2="610.1" stroke="#1d4a7a" stroke-width="1"/>
<line x1="626.5" y1="628.0" x2="954" y2="628.0" stroke="#1d4a7a" stroke-width="1"/>
<line x1="626.5" y1="645.8" x2="954" y2="645.8" stroke="#1d4a7a" stroke-width="1"/>
<line x1="626.5" y1="663.6" x2="954" y2="663.6" stroke="#1d4a7a" stroke-width="1"/>
<line x1="626.5" y1="681.4" x2="954" y2="681.4" stroke="#1d4a7a" stroke-width="1"/>
<line x1="626.5" y1="699.2" x2="954" y2="699.2" stroke="#1d4a7a" stroke-width="1"/>
<line x1="626.5" y1="717.1" x2="954" y2="717.1" stroke="#1d4a7a" stroke-width="1"/>
<line x1="626.5" y1="734.9" x2="954" y2="734.9" stroke="#1d4a7a" stroke-width="1"/>
<line x1="709.5" y1="485.5" x2="709.5" y2="752.7" stroke="#1d4a7a" stroke-width="1"/>
<line x1="790.5" y1="485.5" x2="790.5" y2="752.7" stroke="#1d4a7a" stroke-width="1"/>
<line x1="872.5" y1="485.5" x2="872.5" y2="752.7" stroke="#1d4a7a" stroke-width="1"/>
<line x1="675.5" y1="485.5" x2="675.5" y2="752.7" stroke="#cfcfcf" stroke-width="1"/>
<line x1="626.5" y1="737.5" x2="954" y2="737.5" stroke="#cfcfcf" stroke-width="1"/>
<defs><mask id="mthick" maskUnits="userSpaceOnUse" x="0" y="0" width="1551" height="857"><rect x="0" y="0" width="1551" height="857" fill="#fff"/><rect x="798" y="535.5" width="60" height="9.5" fill="#000"/><rect x="800" y="618.5" width="43" height="8.0" fill="#000"/><rect x="775" y="668" width="75" height="8" fill="#000"/><rect x="737" y="713" width="71" height="7" fill="#000"/></mask>
<mask id="mthin" maskUnits="userSpaceOnUse" x="0" y="0" width="1551" height="857"><rect x="798" y="535.5" width="60" height="9.5" fill="#fff"/><rect x="800" y="618.5" width="43" height="8.0" fill="#fff"/><rect x="775" y="668" width="75" height="8" fill="#fff"/><rect x="737" y="713" width="71" height="7" fill="#fff"/></mask></defs>
<g clip-path="url(#sclip)"><path d="M627.20,741.80 C630.52,741.50 639.27,740.60 647.10,740.00 C654.93,739.40 669.08,739.10 674.20,738.20 C679.32,737.30 673.30,735.50 677.80,734.60 C682.30,733.70 689.77,733.70 701.20,732.80 C712.63,731.90 731.35,730.87 746.40,729.20 C761.45,727.53 780.37,724.52 791.50,722.80 C802.63,721.08 814.70,719.65 813.20,718.90 C811.70,718.15 793.63,718.70 782.50,718.30 C771.37,717.90 756.93,717.10 746.40,716.50 C735.87,715.90 727.73,715.45 719.30,714.70 C710.87,713.95 695.80,713.05 695.80,712.00 C695.80,710.95 720.50,709.45 719.30,708.40 C718.10,707.35 690.10,706.45 688.60,705.70 C687.10,704.95 700.67,704.65 710.30,703.90 C719.93,703.15 734.37,702.55 746.40,701.20 C758.43,699.85 768.97,698.37 782.50,695.80 C796.03,693.23 817.07,688.67 827.60,685.80 C838.13,682.93 840.88,680.70 845.70,678.60 C850.52,676.50 858.02,674.17 856.50,673.20 C854.98,672.23 845.93,672.95 836.60,672.80 C827.27,672.65 812.53,672.53 800.50,672.30 C788.47,672.07 776.43,672.15 764.40,671.40 C752.37,670.65 738.22,669.30 728.30,667.80 C718.38,666.30 705.20,663.77 704.90,662.40 C704.60,661.03 726.20,660.37 726.50,659.60 C726.80,658.83 711.82,658.55 706.70,657.80 C701.58,657.05 694.30,656.00 695.80,655.10 C697.30,654.20 705.77,653.45 715.70,652.40 C725.63,651.35 741.27,650.30 755.40,648.80 C769.53,647.30 787.57,645.65 800.50,643.40 C813.43,641.15 825.17,638.00 833.00,635.30 C840.83,632.60 848.40,629.02 847.50,627.20 C846.60,625.38 835.43,625.32 827.60,624.40 C819.77,623.48 809.52,622.60 800.50,621.70 C791.48,620.80 780.42,620.05 773.50,619.00 C766.58,617.95 760.52,616.30 759.00,615.40 C757.48,614.50 758.98,614.80 764.40,613.60 C769.82,612.40 782.47,610.00 791.50,608.20 C800.53,606.40 811.98,604.17 818.60,602.80 C825.22,601.43 831.80,601.07 831.20,600.00 C830.60,598.93 821.62,597.75 815.00,596.40 C808.38,595.05 799.93,593.40 791.50,591.90 C783.07,590.40 771.92,589.20 764.40,587.40 C756.88,585.60 750.75,583.05 746.40,581.10 C742.05,579.15 738.30,577.05 738.30,575.70 C738.30,574.35 740.53,573.90 746.40,573.00 C752.27,572.10 762.97,571.65 773.50,570.30 C784.03,568.95 798.47,566.87 809.60,564.90 C820.73,562.93 831.88,560.92 840.30,558.50 C848.72,556.08 855.30,552.80 860.10,550.40 C864.90,548.00 868.80,545.45 869.10,544.10 C869.40,542.75 866.42,542.90 861.90,542.30 C857.38,541.70 849.22,540.95 842.00,540.50 C834.78,540.05 827.02,539.90 818.60,539.60 C810.18,539.30 799.93,539.15 791.50,538.70 C783.07,538.25 774.62,537.80 768.00,536.90 C761.38,536.00 754.50,533.90 751.80,533.30" fill="none" stroke="#2591f7" stroke-width="5.2" stroke-linejoin="round" stroke-linecap="round" mask="url(#mthick)"/>
<g mask="url(#mthin)"><path d="M627.20,741.80 C630.52,741.50 639.27,740.60 647.10,740.00 C654.93,739.40 669.08,739.10 674.20,738.20 C679.32,737.30 673.30,735.50 677.80,734.60 C682.30,733.70 689.77,733.70 701.20,732.80 C712.63,731.90 731.35,730.87 746.40,729.20 C761.45,727.53 780.37,724.52 791.50,722.80 C802.63,721.08 814.70,719.65 813.20,718.90 C811.70,718.15 793.63,718.70 782.50,718.30 C771.37,717.90 756.93,717.10 746.40,716.50 C735.87,715.90 727.73,715.45 719.30,714.70 C710.87,713.95 695.80,713.05 695.80,712.00 C695.80,710.95 720.50,709.45 719.30,708.40 C718.10,707.35 690.10,706.45 688.60,705.70 C687.10,704.95 700.67,704.65 710.30,703.90 C719.93,703.15 734.37,702.55 746.40,701.20 C758.43,699.85 768.97,698.37 782.50,695.80 C796.03,693.23 817.07,688.67 827.60,685.80 C838.13,682.93 840.88,680.70 845.70,678.60 C850.52,676.50 858.02,674.17 856.50,673.20 C854.98,672.23 845.93,672.95 836.60,672.80 C827.27,672.65 812.53,672.53 800.50,672.30 C788.47,672.07 776.43,672.15 764.40,671.40 C752.37,670.65 738.22,669.30 728.30,667.80 C718.38,666.30 705.20,663.77 704.90,662.40 C704.60,661.03 726.20,660.37 726.50,659.60 C726.80,658.83 711.82,658.55 706.70,657.80 C701.58,657.05 694.30,656.00 695.80,655.10 C697.30,654.20 705.77,653.45 715.70,652.40 C725.63,651.35 741.27,650.30 755.40,648.80 C769.53,647.30 787.57,645.65 800.50,643.40 C813.43,641.15 825.17,638.00 833.00,635.30 C840.83,632.60 848.40,629.02 847.50,627.20 C846.60,625.38 835.43,625.32 827.60,624.40 C819.77,623.48 809.52,622.60 800.50,621.70 C791.48,620.80 780.42,620.05 773.50,619.00 C766.58,617.95 760.52,616.30 759.00,615.40 C757.48,614.50 758.98,614.80 764.40,613.60 C769.82,612.40 782.47,610.00 791.50,608.20 C800.53,606.40 811.98,604.17 818.60,602.80 C825.22,601.43 831.80,601.07 831.20,600.00 C830.60,598.93 821.62,597.75 815.00,596.40 C808.38,595.05 799.93,593.40 791.50,591.90 C783.07,590.40 771.92,589.20 764.40,587.40 C756.88,585.60 750.75,583.05 746.40,581.10 C742.05,579.15 738.30,577.05 738.30,575.70 C738.30,574.35 740.53,573.90 746.40,573.00 C752.27,572.10 762.97,571.65 773.50,570.30 C784.03,568.95 798.47,566.87 809.60,564.90 C820.73,562.93 831.88,560.92 840.30,558.50 C848.72,556.08 855.30,552.80 860.10,550.40 C864.90,548.00 868.80,545.45 869.10,544.10 C869.40,542.75 866.42,542.90 861.90,542.30 C857.38,541.70 849.22,540.95 842.00,540.50 C834.78,540.05 827.02,539.90 818.60,539.60 C810.18,539.30 799.93,539.15 791.50,538.70 C783.07,538.25 774.62,537.80 768.00,536.90 C761.38,536.00 754.50,533.90 751.80,533.30" fill="none" stroke="#2591f7" stroke-width="2.4"/><path d="M627.20,741.80 C630.52,741.50 639.27,740.60 647.10,740.00 C654.93,739.40 669.08,739.10 674.20,738.20 C679.32,737.30 673.30,735.50 677.80,734.60 C682.30,733.70 689.77,733.70 701.20,732.80 C712.63,731.90 731.35,730.87 746.40,729.20 C761.45,727.53 780.37,724.52 791.50,722.80 C802.63,721.08 814.70,719.65 813.20,718.90 C811.70,718.15 793.63,718.70 782.50,718.30 C771.37,717.90 756.93,717.10 746.40,716.50 C735.87,715.90 727.73,715.45 719.30,714.70 C710.87,713.95 695.80,713.05 695.80,712.00 C695.80,710.95 720.50,709.45 719.30,708.40 C718.10,707.35 690.10,706.45 688.60,705.70 C687.10,704.95 700.67,704.65 710.30,703.90 C719.93,703.15 734.37,702.55 746.40,701.20 C758.43,699.85 768.97,698.37 782.50,695.80 C796.03,693.23 817.07,688.67 827.60,685.80 C838.13,682.93 840.88,680.70 845.70,678.60 C850.52,676.50 858.02,674.17 856.50,673.20 C854.98,672.23 845.93,672.95 836.60,672.80 C827.27,672.65 812.53,672.53 800.50,672.30 C788.47,672.07 776.43,672.15 764.40,671.40 C752.37,670.65 738.22,669.30 728.30,667.80 C718.38,666.30 705.20,663.77 704.90,662.40 C704.60,661.03 726.20,660.37 726.50,659.60 C726.80,658.83 711.82,658.55 706.70,657.80 C701.58,657.05 694.30,656.00 695.80,655.10 C697.30,654.20 705.77,653.45 715.70,652.40 C725.63,651.35 741.27,650.30 755.40,648.80 C769.53,647.30 787.57,645.65 800.50,643.40 C813.43,641.15 825.17,638.00 833.00,635.30 C840.83,632.60 848.40,629.02 847.50,627.20 C846.60,625.38 835.43,625.32 827.60,624.40 C819.77,623.48 809.52,622.60 800.50,621.70 C791.48,620.80 780.42,620.05 773.50,619.00 C766.58,617.95 760.52,616.30 759.00,615.40 C757.48,614.50 758.98,614.80 764.40,613.60 C769.82,612.40 782.47,610.00 791.50,608.20 C800.53,606.40 811.98,604.17 818.60,602.80 C825.22,601.43 831.80,601.07 831.20,600.00 C830.60,598.93 821.62,597.75 815.00,596.40 C808.38,595.05 799.93,593.40 791.50,591.90 C783.07,590.40 771.92,589.20 764.40,587.40 C756.88,585.60 750.75,583.05 746.40,581.10 C742.05,579.15 738.30,577.05 738.30,575.70 C738.30,574.35 740.53,573.90 746.40,573.00 C752.27,572.10 762.97,571.65 773.50,570.30 C784.03,568.95 798.47,566.87 809.60,564.90 C820.73,562.93 831.88,560.92 840.30,558.50 C848.72,556.08 855.30,552.80 860.10,550.40 C864.90,548.00 868.80,545.45 869.10,544.10 C869.40,542.75 866.42,542.90 861.90,542.30 C857.38,541.70 849.22,540.95 842.00,540.50 C834.78,540.05 827.02,539.90 818.60,539.60 C810.18,539.30 799.93,539.15 791.50,538.70 C783.07,538.25 774.62,537.80 768.00,536.90 C761.38,536.00 754.50,533.90 751.80,533.30" fill="none" stroke="#2591f7" stroke-width="4.8" stroke-dasharray="2 2.6"/></g></g>
<rect x="626.8" y="485.6" width="327" height="267" fill="none" stroke="#e8e8e8" stroke-width="1.2"/>
<line x1="626.5" y1="485.4" x2="629.5" y2="485.4" stroke="#ccc" stroke-width="0.8"/>
<line x1="626.5" y1="494.3" x2="629.5" y2="494.3" stroke="#ccc" stroke-width="0.8"/>
<line x1="626.5" y1="503.2" x2="629.5" y2="503.2" stroke="#ccc" stroke-width="0.8"/>
<line x1="626.5" y1="512.1" x2="629.5" y2="512.1" stroke="#ccc" stroke-width="0.8"/>
<line x1="626.5" y1="521.0" x2="629.5" y2="521.0" stroke="#ccc" stroke-width="0.8"/>
<line x1="626.5" y1="530.0" x2="629.5" y2="530.0" stroke="#ccc" stroke-width="0.8"/>
<line x1="626.5" y1="538.9" x2="629.5" y2="538.9" stroke="#ccc" stroke-width="0.8"/>
<line x1="626.5" y1="547.8" x2="629.5" y2="547.8" stroke="#ccc" stroke-width="0.8"/>
<line x1="626.5" y1="556.7" x2="629.5" y2="556.7" stroke="#ccc" stroke-width="0.8"/>
<line x1="626.5" y1="565.6" x2="629.5" y2="565.6" stroke="#ccc" stroke-width="0.8"/>
<line x1="626.5" y1="574.5" x2="629.5" y2="574.5" stroke="#ccc" stroke-width="0.8"/>
<line x1="626.5" y1="583.4" x2="629.5" y2="583.4" stroke="#ccc" stroke-width="0.8"/>
<line x1="626.5" y1="592.3" x2="629.5" y2="592.3" stroke="#ccc" stroke-width="0.8"/>
<line x1="626.5" y1="601.2" x2="629.5" y2="601.2" stroke="#ccc" stroke-width="0.8"/>
<line x1="626.5" y1="610.1" x2="629.5" y2="610.1" stroke="#ccc" stroke-width="0.8"/>
<line x1="626.5" y1="619.0" x2="629.5" y2="619.0" stroke="#ccc" stroke-width="0.8"/>
<line x1="626.5" y1="628.0" x2="629.5" y2="628.0" stroke="#ccc" stroke-width="0.8"/>
<line x1="626.5" y1="636.9" x2="629.5" y2="636.9" stroke="#ccc" stroke-width="0.8"/>
<line x1="626.5" y1="645.8" x2="629.5" y2="645.8" stroke="#ccc" stroke-width="0.8"/>
<line x1="626.5" y1="654.7" x2="629.5" y2="654.7" stroke="#ccc" stroke-width="0.8"/>
<line x1="626.5" y1="663.6" x2="629.5" y2="663.6" stroke="#ccc" stroke-width="0.8"/>
<line x1="626.5" y1="672.5" x2="629.5" y2="672.5" stroke="#ccc" stroke-width="0.8"/>
<line x1="626.5" y1="681.4" x2="629.5" y2="681.4" stroke="#ccc" stroke-width="0.8"/>
<line x1="626.5" y1="690.3" x2="629.5" y2="690.3" stroke="#ccc" stroke-width="0.8"/>
<line x1="626.5" y1="699.2" x2="629.5" y2="699.2" stroke="#ccc" stroke-width="0.8"/>
<line x1="626.5" y1="708.2" x2="629.5" y2="708.2" stroke="#ccc" stroke-width="0.8"/>
<line x1="626.5" y1="717.1" x2="629.5" y2="717.1" stroke="#ccc" stroke-width="0.8"/>
<line x1="626.5" y1="726.0" x2="629.5" y2="726.0" stroke="#ccc" stroke-width="0.8"/>
<line x1="626.5" y1="734.9" x2="629.5" y2="734.9" stroke="#ccc" stroke-width="0.8"/>
<line x1="626.5" y1="743.8" x2="629.5" y2="743.8" stroke="#ccc" stroke-width="0.8"/>
<line x1="626.5" y1="752.7" x2="629.5" y2="752.7" stroke="#ccc" stroke-width="0.8"/>
<line x1="626.8" y1="752.7" x2="626.8" y2="755" stroke="#ddd" stroke-width="0.8"/>
<line x1="667.7" y1="752.7" x2="667.7" y2="755" stroke="#ddd" stroke-width="0.8"/>
<line x1="708.6" y1="752.7" x2="708.6" y2="755" stroke="#ddd" stroke-width="0.8"/>
<line x1="749.5" y1="752.7" x2="749.5" y2="755" stroke="#ddd" stroke-width="0.8"/>
<line x1="790.4" y1="752.7" x2="790.4" y2="755" stroke="#ddd" stroke-width="0.8"/>
<line x1="831.3" y1="752.7" x2="831.3" y2="755" stroke="#ddd" stroke-width="0.8"/>
<line x1="872.2" y1="752.7" x2="872.2" y2="755" stroke="#ddd" stroke-width="0.8"/>
<line x1="913.1" y1="752.7" x2="913.1" y2="755" stroke="#ddd" stroke-width="0.8"/>
<line x1="954.0" y1="752.7" x2="954.0" y2="755" stroke="#ddd" stroke-width="0.8"/>
</svg>
<div class="t" style="right:927.0px;top:481.4px;font-size:8px;line-height:8px;color:#eee;font-family:'Liberation Mono',monospace;letter-spacing:-0.8px">6000.0</div>
<div class="t" style="right:927.0px;top:490.3px;font-size:8px;line-height:8px;color:#eee;font-family:'Liberation Mono',monospace;letter-spacing:-0.8px">5800.0</div>
<div class="t" style="right:927.0px;top:499.2px;font-size:8px;line-height:8px;color:#eee;font-family:'Liberation Mono',monospace;letter-spacing:-0.8px">5600.0</div>
<div class="t" style="right:927.0px;top:508.1px;font-size:8px;line-height:8px;color:#eee;font-family:'Liberation Mono',monospace;letter-spacing:-0.8px">5400.0</div>
<div class="t" style="right:927.0px;top:517.0px;font-size:8px;line-height:8px;color:#eee;font-family:'Liberation Mono',monospace;letter-spacing:-0.8px">5200.0</div>
<div class="t" style="right:927.0px;top:526.0px;font-size:8px;line-height:8px;color:#eee;font-family:'Liberation Mono',monospace;letter-spacing:-0.8px">5000.0</div>
<div class="t" style="right:927.0px;top:534.9px;font-size:8px;line-height:8px;color:#eee;font-family:'Liberation Mono',monospace;letter-spacing:-0.8px">4800.0</div>
<div class="t" style="right:927.0px;top:543.8px;font-size:8px;line-height:8px;color:#eee;font-family:'Liberation Mono',monospace;letter-spacing:-0.8px">4600.0</div>
<div class="t" style="right:927.0px;top:552.7px;font-size:8px;line-height:8px;color:#eee;font-family:'Liberation Mono',monospace;letter-spacing:-0.8px">4400.0</div>
<div class="t" style="right:927.0px;top:561.6px;font-size:8px;line-height:8px;color:#eee;font-family:'Liberation Mono',monospace;letter-spacing:-0.8px">4200.0</div>
<div class="t" style="right:927.0px;top:570.5px;font-size:8px;line-height:8px;color:#eee;font-family:'Liberation Mono',monospace;letter-spacing:-0.8px">4000.0</div>
<div class="t" style="right:927.0px;top:579.4px;font-size:8px;line-height:8px;color:#eee;font-family:'Liberation Mono',monospace;letter-spacing:-0.8px">3800.0</div>
<div class="t" style="right:927.0px;top:588.3px;font-size:8px;line-height:8px;color:#eee;font-family:'Liberation Mono',monospace;letter-spacing:-0.8px">3600.0</div>
<div class="t" style="right:927.0px;top:597.2px;font-size:8px;line-height:8px;color:#eee;font-family:'Liberation Mono',monospace;letter-spacing:-0.8px">3400.0</div>
<div class="t" style="right:927.0px;top:606.1px;font-size:8px;line-height:8px;color:#eee;font-family:'Liberation Mono',monospace;letter-spacing:-0.8px">3200.0</div>
<div class="t" style="right:927.0px;top:615.0px;font-size:8px;line-height:8px;color:#eee;font-family:'Liberation Mono',monospace;letter-spacing:-0.8px">3000.0</div>
<div class="t" style="right:927.0px;top:624.0px;font-size:8px;line-height:8px;color:#eee;font-family:'Liberation Mono',monospace;letter-spacing:-0.8px">2800.0</div>
<div class="t" style="right:927.0px;top:632.9px;font-size:8px;line-height:8px;color:#eee;font-family:'Liberation Mono',monospace;letter-spacing:-0.8px">2600.0</div>
<div class="t" style="right:927.0px;top:641.8px;font-size:8px;line-height:8px;color:#eee;font-family:'Liberation Mono',monospace;letter-spacing:-0.8px">2400.0</div>
<div class="t" style="right:927.0px;top:650.7px;font-size:8px;line-height:8px;color:#eee;font-family:'Liberation Mono',monospace;letter-spacing:-0.8px">2200.0</div>
<div class="t" style="right:927.0px;top:659.6px;font-size:8px;line-height:8px;color:#eee;font-family:'Liberation Mono',monospace;letter-spacing:-0.8px">2000.0</div>
<div class="t" style="right:927.0px;top:668.5px;font-size:8px;line-height:8px;color:#eee;font-family:'Liberation Mono',monospace;letter-spacing:-0.8px">1800.0</div>
<div class="t" style="right:927.0px;top:677.4px;font-size:8px;line-height:8px;color:#eee;font-family:'Liberation Mono',monospace;letter-spacing:-0.8px">1600.0</div>
<div class="t" style="right:927.0px;top:686.3px;font-size:8px;line-height:8px;color:#eee;font-family:'Liberation Mono',monospace;letter-spacing:-0.8px">1400.0</div>
<div class="t" style="right:927.0px;top:695.2px;font-size:8px;line-height:8px;color:#eee;font-family:'Liberation Mono',monospace;letter-spacing:-0.8px">1200.0</div>
<div class="t" style="right:927.0px;top:704.2px;font-size:8px;line-height:8px;color:#eee;font-family:'Liberation Mono',monospace;letter-spacing:-0.8px">1000.0</div>
<div class="t" style="right:927.0px;top:713.1px;font-size:8px;line-height:8px;color:#eee;font-family:'Liberation Mono',monospace;letter-spacing:-0.8px">800.0</div>
<div class="t" style="right:927.0px;top:722.0px;font-size:8px;line-height:8px;color:#eee;font-family:'Liberation Mono',monospace;letter-spacing:-0.8px">600.0</div>
<div class="t" style="right:927.0px;top:730.9px;font-size:8px;line-height:8px;color:#eee;font-family:'Liberation Mono',monospace;letter-spacing:-0.8px">400.0</div>
<div class="t" style="right:927.0px;top:739.8px;font-size:8px;line-height:8px;color:#eee;font-family:'Liberation Mono',monospace;letter-spacing:-0.8px">200.0</div>
<div class="t" style="right:927.0px;top:748.7px;font-size:8px;line-height:8px;color:#eee;font-family:'Liberation Mono',monospace;letter-spacing:-0.8px">0.0</div>
<div class="r" style="left:587px;top:750px;width:367.5px;height:24px;overflow:hidden">
<div class="t" style="left:33.9px;top:5px;font-size:7.5px;line-height:7.5px;color:#ddd;font-family:'Liberation Mono',monospace;letter-spacing:-0.6px">0.0</div>
<div class="t" style="left:72.9px;top:5px;font-size:7.5px;line-height:7.5px;color:#ddd;font-family:'Liberation Mono',monospace;letter-spacing:-0.6px">50.0</div>
<div class="t" style="left:111.8px;top:5px;font-size:7.5px;line-height:7.5px;color:#ddd;font-family:'Liberation Mono',monospace;letter-spacing:-0.6px">100.0</div>
<div class="t" style="left:152.8px;top:5px;font-size:7.5px;line-height:7.5px;color:#ddd;font-family:'Liberation Mono',monospace;letter-spacing:-0.6px">150.0</div>
<div class="t" style="left:193.6px;top:5px;font-size:7.5px;line-height:7.5px;color:#ddd;font-family:'Liberation Mono',monospace;letter-spacing:-0.6px">200.0</div>
<div class="t" style="left:234.5px;top:5px;font-size:7.5px;line-height:7.5px;color:#ddd;font-family:'Liberation Mono',monospace;letter-spacing:-0.6px">250.0</div>
<div class="t" style="left:275.5px;top:5px;font-size:7.5px;line-height:7.5px;color:#ddd;font-family:'Liberation Mono',monospace;letter-spacing:-0.6px">300.0</div>
<div class="t" style="left:316.4px;top:5px;font-size:7.5px;line-height:7.5px;color:#ddd;font-family:'Liberation Mono',monospace;letter-spacing:-0.6px">350.0</div>
<div class="t" style="left:361.1px;top:5px;font-size:7.5px;line-height:7.5px;color:#ddd;font-family:'Liberation Mono',monospace;letter-spacing:-0.6px">400</div>
</div>
<div class="r" style="left:762px;top:763.5px;width:4.5px;height:4.5px;background:#2591f7"></div>
<div class="t" style="left:770px;top:762.5px;font-size:7px;line-height:7px;color:#2591f7;font-family:'Liberation Mono',monospace">vCar( 59.8kph)</div>
<div class="t" style="left:594.5px;top:611px;font-size:7px;line-height:7px;color:#2591f7;font-family:'Liberation Mono',monospace;transform:translate(-50%,-50%) rotate(-90deg)">sLap(335.2m)</div>
<div class="r" style="left:592.2px;top:639px;width:5.3px;height:5.2px;background:#2591f7"></div>
<div class="r" style="left:960.0px;top:154.0px;width:538.0px;height:22.5px;background:#000"></div>
<div class="r" style="left:959.5px;top:155.2px;width:28.3px;height:19.8px;background:#29292b;border:1px solid #3a3a3d;border-bottom:none"></div>
<div class="r" style="left:987.8px;top:157.2px;width:33.8px;height:17.1px;background:#2d2d30;border:1px solid #3c3c40"></div>
<div class="r" style="left:1021.6px;top:157.2px;width:52.4px;height:17.1px;background:#2d2d30;border:1px solid #3c3c40"></div>
<div class="r" style="left:1074.0px;top:157.2px;width:32.0px;height:17.1px;background:#2d2d30;border:1px solid #3c3c40"></div>
<div class="r" style="left:1106.0px;top:157.2px;width:48.4px;height:17.1px;background:#2d2d30;border:1px solid #3c3c40"></div>
<div class="t" style="left:967.0px;top:160.1px;font-size:11px;line-height:11px;color:#e8e8e8;">All</div>
<div class="t" style="left:992.3px;top:160.1px;font-size:11px;line-height:11px;color:#e8e8e8;">High</div>
<div class="t" style="left:1028.4px;top:160.1px;font-size:11px;line-height:11px;color:#e8e8e8;">Medium</div>
<div class="t" style="left:1080.3px;top:160.1px;font-size:11px;line-height:11px;color:#e8e8e8;">Low</div>
<div class="t" style="left:1112.0px;top:160.1px;font-size:11px;line-height:11px;color:#e8e8e8;">Masked</div>
<div class="r" style="left:1157.0px;top:157.0px;width:266.5px;height:18.0px;background:#29292b;border:1px solid #4a4a4e"></div>
<div class="t" style="left:1161.3px;top:160.5px;font-size:10.5px;line-height:10.5px;color:#8a8a8a;">Search...</div>
<div class="r" style="left:1406.7px;top:158.0px;width:15.8px;height:16.0px;background:#3a3a3e;border:1px solid #555"></div>
<svg style="left:1410px;top:161px" width="10" height="10"><path d="M2.5,2.5 L7.5,7.5 M7.5,2.5 L2.5,7.5" stroke="#2a9df4" stroke-width="1.8"/></svg>
<svg style="left:1480px;top:158px" width="14" height="14"><path d="M0.5,0.5 H13.5 L8,6.5 V12.5 L6,11 V6.5 Z" fill="#9a9a9a"/></svg>
<div class="r" style="left:960.0px;top:176.6px;width:522.0px;height:18.1px;background:#272729"></div>
<div class="r" style="left:977.0px;top:176.6px;width:1.0px;height:18.1px;background:#3a3a3d"></div>
<div class="r" style="left:1084.5px;top:176.6px;width:1.0px;height:18.1px;background:#3a3a3d"></div>
<div class="r" style="left:1218.0px;top:176.6px;width:1.0px;height:18.1px;background:#3a3a3d"></div>
<div class="r" style="left:1085.5px;top:176.6px;width:132.5px;height:18.1px;background:#333336"></div>
<div class="t" style="left:983.7px;top:179.9px;font-size:10.5px;line-height:10.5px;color:#d8d8d8;">Timestamp</div>
<div class="t" style="left:1091.0px;top:179.9px;font-size:10.5px;line-height:10.5px;color:#d8d8d8;">Group</div>
<div class="t" style="left:1222.0px;top:179.9px;font-size:10.5px;line-height:10.5px;color:#d8d8d8;">Id</div>
<div class="r" style="left:960px;top:194.7px;width:522px;height:241.1px;overflow:hidden">
<div class="r" style="left:0;top:0.0px;width:522px;height:17.9px;background:#3399ff"></div>
<div class="r" style="left:5.3px;top:6.2px;width:7.4px;height:7.4px;border-radius:50%;background:#0000f0"></div>
<div class="t" style="left:20.4px;top:5.1px;font-size:10.5px;line-height:10.5px;color:#e6f2ff;letter-spacing:-0.45px">14:03:37.625</div>
<div class="t" style="left:127.5px;top:5.1px;font-size:10.5px;line-height:10.5px;color:#e6f2ff;letter-spacing:-0.45px">FIA</div>
<div class="t" style="left:260.5px;top:5.1px;font-size:10.5px;line-height:10.5px;color:#e6f2ff;letter-spacing:-0.45px">E-8046</div>
<div class="r" style="left:0;top:17.9px;width:522px;height:17.9px;background:#0f0f0f"></div>
<div class="r" style="left:5.3px;top:24.1px;width:7.4px;height:7.4px;border-radius:50%;background:#0000f0"></div>
<div class="t" style="left:20.4px;top:23.0px;font-size:10.5px;line-height:10.5px;color:#f0f0f0;letter-spacing:-0.45px">14:04:49.984</div>
<div class="t" style="left:127.5px;top:23.0px;font-size:10.5px;line-height:10.5px;color:#f0f0f0;letter-spacing:-0.45px">FIA</div>
<div class="t" style="left:260.5px;top:23.0px;font-size:10.5px;line-height:10.5px;color:#f0f0f0;letter-spacing:-0.45px">E-80B3</div>
<div class="r" style="left:0;top:35.7px;width:522px;height:17.9px;background:#1c1c1c"></div>
<div class="r" style="left:5.3px;top:41.9px;width:7.4px;height:7.4px;border-radius:50%;background:#0000f0"></div>
<div class="t" style="left:20.4px;top:40.8px;font-size:10.5px;line-height:10.5px;color:#f0f0f0;letter-spacing:-0.45px">14:03:55.200</div>
<div class="t" style="left:127.5px;top:40.8px;font-size:10.5px;line-height:10.5px;color:#f0f0f0;letter-spacing:-0.45px">FIA</div>
<div class="t" style="left:260.5px;top:40.8px;font-size:10.5px;line-height:10.5px;color:#f0f0f0;letter-spacing:-0.45px">E-80B3</div>
<div class="r" style="left:0;top:53.6px;width:522px;height:17.9px;background:#0f0f0f"></div>
<div class="r" style="left:5.3px;top:59.8px;width:7.4px;height:7.4px;border-radius:50%;background:#0000f0"></div>
<div class="t" style="left:20.4px;top:58.7px;font-size:10.5px;line-height:10.5px;color:#f0f0f0;letter-spacing:-0.45px">14:03:50.660</div>
<div class="t" style="left:127.5px;top:58.7px;font-size:10.5px;line-height:10.5px;color:#f0f0f0;letter-spacing:-0.45px">FIA</div>
<div class="t" style="left:260.5px;top:58.7px;font-size:10.5px;line-height:10.5px;color:#f0f0f0;letter-spacing:-0.45px">E-80B3</div>
<div class="r" style="left:0;top:71.4px;width:522px;height:17.9px;background:#1c1c1c"></div>
<div class="r" style="left:5.3px;top:77.6px;width:7.4px;height:7.4px;border-radius:50%;background:#0000f0"></div>
<div class="t" style="left:20.4px;top:76.6px;font-size:10.5px;line-height:10.5px;color:#f0f0f0;letter-spacing:-0.45px">14:07:18.938</div>
<div class="t" style="left:127.5px;top:76.6px;font-size:10.5px;line-height:10.5px;color:#f0f0f0;letter-spacing:-0.45px">FIA</div>
<div class="t" style="left:260.5px;top:76.6px;font-size:10.5px;line-height:10.5px;color:#f0f0f0;letter-spacing:-0.45px">E-80B3</div>
<div class="r" style="left:0;top:89.3px;width:522px;height:17.9px;background:#0f0f0f"></div>
<div class="r" style="left:5.3px;top:95.5px;width:7.4px;height:7.4px;border-radius:50%;background:#0000f0"></div>
<div class="t" style="left:20.4px;top:94.4px;font-size:10.5px;line-height:10.5px;color:#f0f0f0;letter-spacing:-0.45px">14:06:40.324</div>
<div class="t" style="left:127.5px;top:94.4px;font-size:10.5px;line-height:10.5px;color:#f0f0f0;letter-spacing:-0.45px">FIA</div>
<div class="t" style="left:260.5px;top:94.4px;font-size:10.5px;line-height:10.5px;color:#f0f0f0;letter-spacing:-0.45px">E-80B3</div>
<div class="r" style="left:0;top:107.2px;width:522px;height:17.9px;background:#1c1c1c"></div>
<div class="r" style="left:5.3px;top:113.4px;width:7.4px;height:7.4px;border-radius:50%;background:#0000f0"></div>
<div class="t" style="left:20.4px;top:112.3px;font-size:10.5px;line-height:10.5px;color:#f0f0f0;letter-spacing:-0.45px">14:06:44.426</div>
<div class="t" style="left:127.5px;top:112.3px;font-size:10.5px;line-height:10.5px;color:#f0f0f0;letter-spacing:-0.45px">FIA</div>
<div class="t" style="left:260.5px;top:112.3px;font-size:10.5px;line-height:10.5px;color:#f0f0f0;letter-spacing:-0.45px">E-80B3</div>
<div class="r" style="left:0;top:125.0px;width:522px;height:17.9px;background:#0f0f0f"></div>
<div class="r" style="left:5.3px;top:131.2px;width:7.4px;height:7.4px;border-radius:50%;background:#0000f0"></div>
<div class="t" style="left:20.4px;top:130.1px;font-size:10.5px;line-height:10.5px;color:#f0f0f0;letter-spacing:-0.45px">14:05:07.605</div>
<div class="t" style="left:127.5px;top:130.1px;font-size:10.5px;line-height:10.5px;color:#f0f0f0;letter-spacing:-0.45px">Chassis</div>
<div class="t" style="left:260.5px;top:130.1px;font-size:10.5px;line-height:10.5px;color:#f0f0f0;letter-spacing:-0.45px">E-8615</div>
<div class="r" style="left:0;top:142.9px;width:522px;height:17.9px;background:#1c1c1c"></div>
<div class="r" style="left:5.3px;top:149.1px;width:7.4px;height:7.4px;border-radius:50%;background:#0000f0"></div>
<div class="t" style="left:20.4px;top:148.0px;font-size:10.5px;line-height:10.5px;color:#f0f0f0;letter-spacing:-0.45px">14:07:42.325</div>
<div class="t" style="left:127.5px;top:148.0px;font-size:10.5px;line-height:10.5px;color:#f0f0f0;letter-spacing:-0.45px">Chassis</div>
<div class="t" style="left:260.5px;top:148.0px;font-size:10.5px;line-height:10.5px;color:#f0f0f0;letter-spacing:-0.45px">E-8615</div>
<div class="r" style="left:0;top:160.7px;width:522px;height:17.9px;background:#0f0f0f"></div>
<div class="r" style="left:5.3px;top:166.9px;width:7.4px;height:7.4px;border-radius:50%;background:#0000f0"></div>
<div class="t" style="left:20.4px;top:165.9px;font-size:10.5px;line-height:10.5px;color:#f0f0f0;letter-spacing:-0.45px">14:06:02.765</div>
<div class="t" style="left:127.5px;top:165.9px;font-size:10.5px;line-height:10.5px;color:#f0f0f0;letter-spacing:-0.45px">Chassis</div>
<div class="t" style="left:260.5px;top:165.9px;font-size:10.5px;line-height:10.5px;color:#f0f0f0;letter-spacing:-0.45px">E-8615</div>
<div class="r" style="left:0;top:178.6px;width:522px;height:17.9px;background:#1c1c1c"></div>
<div class="r" style="left:5.3px;top:184.8px;width:7.4px;height:7.4px;border-radius:50%;background:#0000f0"></div>
<div class="t" style="left:20.4px;top:183.7px;font-size:10.5px;line-height:10.5px;color:#f0f0f0;letter-spacing:-0.45px">14:06:43.665</div>
<div class="t" style="left:127.5px;top:183.7px;font-size:10.5px;line-height:10.5px;color:#f0f0f0;letter-spacing:-0.45px">Chassis</div>
<div class="t" style="left:260.5px;top:183.7px;font-size:10.5px;line-height:10.5px;color:#f0f0f0;letter-spacing:-0.45px">E-8615</div>
<div class="r" style="left:0;top:196.5px;width:522px;height:17.9px;background:#0f0f0f"></div>
<div class="r" style="left:5.3px;top:202.7px;width:7.4px;height:7.4px;border-radius:50%;background:#0000f0"></div>
<div class="t" style="left:20.4px;top:201.6px;font-size:10.5px;line-height:10.5px;color:#f0f0f0;letter-spacing:-0.45px">14:04:09.825</div>
<div class="t" style="left:127.5px;top:201.6px;font-size:10.5px;line-height:10.5px;color:#f0f0f0;letter-spacing:-0.45px">Chassis</div>
<div class="t" style="left:260.5px;top:201.6px;font-size:10.5px;line-height:10.5px;color:#f0f0f0;letter-spacing:-0.45px">E-8615</div>
<div class="r" style="left:0;top:214.3px;width:522px;height:17.9px;background:#1c1c1c"></div>
<div class="r" style="left:5.3px;top:220.5px;width:7.4px;height:7.4px;border-radius:50%;background:#0000f0"></div>
<div class="t" style="left:20.4px;top:219.4px;font-size:10.5px;line-height:10.5px;color:#f0f0f0;letter-spacing:-0.45px">14:06:40.505</div>
<div class="t" style="left:127.5px;top:219.4px;font-size:10.5px;line-height:10.5px;color:#f0f0f0;letter-spacing:-0.45px">Chassis</div>
<div class="t" style="left:260.5px;top:219.4px;font-size:10.5px;line-height:10.5px;color:#f0f0f0;letter-spacing:-0.45px">E-8614</div>
<div class="r" style="left:0;top:232.2px;width:522px;height:17.9px;background:#0f0f0f"></div>
<div class="r" style="left:5.3px;top:238.4px;width:7.4px;height:7.4px;border-radius:50%;background:#0000f0"></div>
<div class="t" style="left:20.4px;top:237.3px;font-size:10.5px;line-height:10.5px;color:#f0f0f0;letter-spacing:-0.45px">14:06:00.165</div>
<div class="t" style="left:127.5px;top:237.3px;font-size:10.5px;line-height:10.5px;color:#f0f0f0;letter-spacing:-0.45px">Chassis</div>
<div class="t" style="left:260.5px;top:237.3px;font-size:10.5px;line-height:10.5px;color:#f0f0f0;letter-spacing:-0.45px">E-8618</div>
</div>
<div class="r" style="left:1482.0px;top:176.6px;width:14.2px;height:259.2px;background:#2d2d30"></div>
<div class="r" style="left:1483.0px;top:194.5px;width:13.0px;height:14.5px;background:#333337"></div>
<svg style="left:1485px;top:198px" width="9" height="8"><path d="M0.5,6 L4.5,1.5 L8.5,6 Z" fill="#9a9a9a"/></svg>
<div class="r" style="left:1483.0px;top:399.1px;width:13.0px;height:6.1px;background:#3e3e42"></div>
<div class="r" style="left:960.0px;top:435.8px;width:536.2px;height:15.2px;background:#2d2d30"></div>
<div class="r" style="left:961.0px;top:437.0px;width:14.0px;height:13.0px;background:#333337"></div>
<svg style="left:964px;top:439px" width="8" height="9"><path d="M6,0.5 L1.5,4.5 L6,8.5 Z" fill="#8a8a8a"/></svg>
<div class="r" style="left:975.4px;top:437.0px;width:226.8px;height:13.0px;background:#3e3e42"></div>
<div class="r" style="left:1085.0px;top:440.0px;width:1.0px;height:7.0px;background:#777"></div>
<div class="r" style="left:1087.0px;top:440.0px;width:1.0px;height:7.0px;background:#777"></div>
<div class="r" style="left:1089.0px;top:440.0px;width:1.0px;height:7.0px;background:#777"></div>
<div class="r" style="left:1468.3px;top:437.0px;width:13.1px;height:13.0px;background:#333337"></div>
<svg style="left:1472px;top:439px" width="8" height="9"><path d="M1.5,0.5 L6,4.5 L1.5,8.5 Z" fill="#8a8a8a"/></svg>
<div class="r" style="left:1483.0px;top:437.0px;width:13.0px;height:13.0px;background:#333337"></div>
<svg style="left:1485px;top:441px" width="9" height="8"><path d="M0.5,1.5 L4.5,6 L8.5,1.5 Z" fill="#9a9a9a"/></svg>
<svg style="left:0;top:0" width="1551" height="857" viewBox="0 0 1551 857">
<line x1="1048.5" y1="476" x2="1048.5" y2="732.5" stroke="#3a3a3a" stroke-width="1"/>
<line x1="1098.3" y1="476" x2="1098.3" y2="732.5" stroke="#3a3a3a" stroke-width="1"/>
<line x1="1148.2" y1="476" x2="1148.2" y2="732.5" stroke="#3a3a3a" stroke-width="1"/>
<line x1="1198.1" y1="476" x2="1198.1" y2="732.5" stroke="#3a3a3a" stroke-width="1"/>
<line x1="1248.0" y1="476" x2="1248.0" y2="732.5" stroke="#3a3a3a" stroke-width="1"/>
<line x1="1297.8" y1="476" x2="1297.8" y2="732.5" stroke="#3a3a3a" stroke-width="1"/>
<line x1="1347.7" y1="476" x2="1347.7" y2="732.5" stroke="#3a3a3a" stroke-width="1"/>
<line x1="1397.6" y1="476" x2="1397.6" y2="732.5" stroke="#3a3a3a" stroke-width="1"/>
<line x1="1447.4" y1="476" x2="1447.4" y2="732.5" stroke="#3a3a3a" stroke-width="1"/>
<line x1="1497.3" y1="476" x2="1497.3" y2="732.5" stroke="#3a3a3a" stroke-width="1"/>
<line x1="998.6" y1="679.2" x2="1497" y2="679.2" stroke="#3a3a3a" stroke-width="1"/>
<line x1="998.6" y1="626.0" x2="1497" y2="626.0" stroke="#3a3a3a" stroke-width="1"/>
<line x1="998.6" y1="572.7" x2="1497" y2="572.7" stroke="#3a3a3a" stroke-width="1"/>
<line x1="998.6" y1="519.5" x2="1497" y2="519.5" stroke="#3a3a3a" stroke-width="1"/>
<rect x="998.6" y="519.4" width="49.87" height="213.1" fill="#1e90ff" stroke="#8a8a8a" stroke-width="1"/>
<rect x="1048.5" y="632.5" width="49.87" height="100.0" fill="#1e90ff" stroke="#8a8a8a" stroke-width="1"/>
<rect x="1098.3" y="480.5" width="49.87" height="252.0" fill="#1e90ff" stroke="#8a8a8a" stroke-width="1"/>
<rect x="1148.2" y="559.5" width="49.87" height="173.0" fill="#1e90ff" stroke="#8a8a8a" stroke-width="1"/>
<rect x="1198.1" y="511.1" width="49.87" height="221.4" fill="#1e90ff" stroke="#8a8a8a" stroke-width="1"/>
<rect x="1248.0" y="574.2" width="49.87" height="158.3" fill="#1e90ff" stroke="#8a8a8a" stroke-width="1"/>
<rect x="1297.8" y="582.1" width="49.87" height="150.4" fill="#1e90ff" stroke="#8a8a8a" stroke-width="1"/>
<rect x="1347.7" y="698.3" width="49.87" height="34.2" fill="#1e90ff" stroke="#8a8a8a" stroke-width="1"/>
<line x1="998.6" y1="476" x2="998.6" y2="733.0" stroke="#9a9a9a" stroke-width="1"/>
<line x1="993.6" y1="732.5" x2="1497" y2="732.5" stroke="#9a9a9a" stroke-width="1.2"/>
<line x1="993.6" y1="732.5" x2="998.6" y2="732.5" stroke="#777" stroke-width="0.8"/>
<line x1="995.6" y1="721.8" x2="998.6" y2="721.8" stroke="#777" stroke-width="0.8"/>
<line x1="995.6" y1="711.2" x2="998.6" y2="711.2" stroke="#777" stroke-width="0.8"/>
<line x1="995.6" y1="700.5" x2="998.6" y2="700.5" stroke="#777" stroke-width="0.8"/>
<line x1="995.6" y1="689.9" x2="998.6" y2="689.9" stroke="#777" stroke-width="0.8"/>
<line x1="993.6" y1="679.2" x2="998.6" y2="679.2" stroke="#777" stroke-width="0.8"/>
<line x1="995.6" y1="668.6" x2="998.6" y2="668.6" stroke="#777" stroke-width="0.8"/>
<line x1="995.6" y1="657.9" x2="998.6" y2="657.9" stroke="#777" stroke-width="0.8"/>
<line x1="995.6" y1="647.3" x2="998.6" y2="647.3" stroke="#777" stroke-width="0.8"/>
<line x1="995.6" y1="636.6" x2="998.6" y2="636.6" stroke="#777" stroke-width="0.8"/>
<line x1="993.6" y1="626.0" x2="998.6" y2="626.0" stroke="#777" stroke-width="0.8"/>
<line x1="995.6" y1="615.3" x2="998.6" y2="615.3" stroke="#777" stroke-width="0.8"/>
<line x1="995.6" y1="604.7" x2="998.6" y2="604.7" stroke="#777" stroke-width="0.8"/>
<line x1="995.6" y1="594.0" x2="998.6" y2="594.0" stroke="#777" stroke-width="0.8"/>
<line x1="995.6" y1="583.4" x2="998.6" y2="583.4" stroke="#777" stroke-width="0.8"/>
<line x1="993.6" y1="572.7" x2="998.6" y2="572.7" stroke="#777" stroke-width="0.8"/>
<line x1="995.6" y1="562.1" x2="998.6" y2="562.1" stroke="#777" stroke-width="0.8"/>
<line x1="995.6" y1="551.4" x2="998.6" y2="551.4" stroke="#777" stroke-width="0.8"/>
<line x1="995.6" y1="540.8" x2="998.6" y2="540.8" stroke="#777" stroke-width="0.8"/>
<line x1="995.6" y1="530.1" x2="998.6" y2="530.1" stroke="#777" stroke-width="0.8"/>
<line x1="993.6" y1="519.5" x2="998.6" y2="519.5" stroke="#777" stroke-width="0.8"/>
<line x1="995.6" y1="508.8" x2="998.6" y2="508.8" stroke="#777" stroke-width="0.8"/>
<line x1="995.6" y1="498.2" x2="998.6" y2="498.2" stroke="#777" stroke-width="0.8"/>
<line x1="995.6" y1="487.5" x2="998.6" y2="487.5" stroke="#777" stroke-width="0.8"/>
<line x1="995.6" y1="476.9" x2="998.6" y2="476.9" stroke="#777" stroke-width="0.8"/>
<line x1="998.6" y1="732.5" x2="998.6" y2="737.5" stroke="#aaa" stroke-width="1"/>
<line x1="1048.5" y1="732.5" x2="1048.5" y2="737.5" stroke="#aaa" stroke-width="1"/>
<line x1="1098.3" y1="732.5" x2="1098.3" y2="737.5" stroke="#aaa" stroke-width="1"/>
<line x1="1148.2" y1="732.5" x2="1148.2" y2="737.5" stroke="#aaa" stroke-width="1"/>
<line x1="1198.1" y1="732.5" x2="1198.1" y2="737.5" stroke="#aaa" stroke-width="1"/>
<line x1="1248.0" y1="732.5" x2="1248.0" y2="737.5" stroke="#aaa" stroke-width="1"/>
<line x1="1297.8" y1="732.5" x2="1297.8" y2="737.5" stroke="#aaa" stroke-width="1"/>
<line x1="1347.7" y1="732.5" x2="1347.7" y2="737.5" stroke="#aaa" stroke-width="1"/>
<line x1="1397.6" y1="732.5" x2="1397.6" y2="737.5" stroke="#aaa" stroke-width="1"/>
<line x1="1447.4" y1="732.5" x2="1447.4" y2="737.5" stroke="#aaa" stroke-width="1"/>
<line x1="1497.3" y1="732.5" x2="1497.3" y2="737.5" stroke="#aaa" stroke-width="1"/>
</svg>
<div class="t" style="right:561.0px;top:514.7px;font-size:11px;line-height:11px;color:#e8e8e8">20</div>
<div class="t" style="right:561.0px;top:567.7px;font-size:11px;line-height:11px;color:#e8e8e8">15</div>
<div class="t" style="right:561.0px;top:621.2px;font-size:11px;line-height:11px;color:#e8e8e8">10</div>
<div class="t" style="right:566.0px;top:674.2px;font-size:11px;line-height:11px;color:#e8e8e8">5</div>
<div class="t" style="right:566.0px;top:721.7px;font-size:11px;line-height:11px;color:#e8e8e8">0</div>
<div class="t" style="left:1011.3px;top:744.2px;font-size:11px;line-height:11px;color:#e8e8e8;transform:translateX(-50%)">0.0</div>
<div class="t" style="left:1048.5px;top:744.2px;font-size:11px;line-height:11px;color:#e8e8e8;transform:translateX(-50%)">40.0</div>
<div class="t" style="left:1098.3px;top:744.2px;font-size:11px;line-height:11px;color:#e8e8e8;transform:translateX(-50%)">80.0</div>
<div class="t" style="left:1148.2px;top:744.2px;font-size:11px;line-height:11px;color:#e8e8e8;transform:translateX(-50%)">120.0</div>
<div class="t" style="left:1198.1px;top:744.2px;font-size:11px;line-height:11px;color:#e8e8e8;transform:translateX(-50%)">160.0</div>
<div class="t" style="left:1248.0px;top:744.2px;font-size:11px;line-height:11px;color:#e8e8e8;transform:translateX(-50%)">200.0</div>
<div class="t" style="left:1297.8px;top:744.2px;font-size:11px;line-height:11px;color:#e8e8e8;transform:translateX(-50%)">240.0</div>
<div class="t" style="left:1347.7px;top:744.2px;font-size:11px;line-height:11px;color:#e8e8e8;transform:translateX(-50%)">280.0</div>
<div class="t" style="left:1397.6px;top:744.2px;font-size:11px;line-height:11px;color:#e8e8e8;transform:translateX(-50%)">320.0</div>
<div class="t" style="left:1447.4px;top:744.2px;font-size:11px;line-height:11px;color:#e8e8e8;transform:translateX(-50%)">360.0</div>
<div class="t" style="left:1484.6px;top:744.2px;font-size:11px;line-height:11px;color:#e8e8e8;transform:translateX(-50%)">400.0</div>
<div class="t" style="left:1228.8px;top:761.2px;font-size:11px;line-height:11px;color:#e8e8e8;transform:translateX(-50%)">vCar (kph)</div>
<div class="t" style="left:969px;top:604.8px;font-size:11px;line-height:11px;color:#e8e8e8;transform:translate(-50%,-50%) rotate(-90deg)">Seconds</div>
<div class="t" style="left:1229px;top:725.7px;font-size:17.5px;line-height:17.5px;color:rgba(190,190,190,0.55)">Activate Windows</div>
<div class="t" style="left:1229.5px;top:747.8px;font-size:13.3px;line-height:13.3px;color:rgba(190,190,190,0.55)">Go to Settings to activate Windows.</div>
<svg style="left:43.0px;top:139.1px" width="9.4" height="10.9" viewBox="0 0 9.4 10.9"><path d="M0,0 H9.4 V10.9 L4.7,7.7 L0,10.9 Z" fill="#1e8ef8"/></svg>
<svg style="left:569.3px;top:140.5px" width="8" height="8"><path d="M0.5,0.5 L7.5,7.5 M7.5,0.5 L0.5,7.5" stroke="#c4c4c4" stroke-width="1.2"/></svg>
<svg style="left:555.3px;top:142.5px" width="9" height="6"><path d="M0.5,0.8 H8.5 L4.5,5 Z" fill="#bdbdbd"/></svg>
<svg style="left:590.1px;top:139.1px" width="9.4" height="10.9" viewBox="0 0 9.4 10.9"><path d="M0,0 H9.4 V10.9 L4.7,7.7 L0,10.9 Z" fill="#1e8ef8"/></svg>
<svg style="left:941.8px;top:140.5px" width="8" height="8"><path d="M0.5,0.5 L7.5,7.5 M7.5,0.5 L0.5,7.5" stroke="#c4c4c4" stroke-width="1.2"/></svg>
<svg style="left:927.8px;top:142.5px" width="9" height="6"><path d="M0.5,0.8 H8.5 L4.5,5 Z" fill="#bdbdbd"/></svg>
<svg style="left:962.8px;top:139.1px" width="9.4" height="10.9" viewBox="0 0 9.4 10.9"><path d="M0,0 H9.4 V10.9 L4.7,7.7 L0,10.9 Z" fill="#1e8ef8"/></svg>
<svg style="left:1485.0px;top:140.5px" width="8" height="8"><path d="M0.5,0.5 L7.5,7.5 M7.5,0.5 L0.5,7.5" stroke="#c4c4c4" stroke-width="1.2"/></svg>
<svg style="left:1471.0px;top:142.5px" width="9" height="6"><path d="M0.5,0.8 H8.5 L4.5,5 Z" fill="#bdbdbd"/></svg>
<svg style="left:590.1px;top:460.9px" width="9.4" height="10.9" viewBox="0 0 9.4 10.9"><path d="M0,0 H9.4 V10.9 L4.7,7.7 L0,10.9 Z" fill="#1e8ef8"/></svg>
<svg style="left:941.8px;top:462.3px" width="8" height="8"><path d="M0.5,0.5 L7.5,7.5 M7.5,0.5 L0.5,7.5" stroke="#c4c4c4" stroke-width="1.2"/></svg>
<svg style="left:927.8px;top:464.3px" width="9" height="6"><path d="M0.5,0.8 H8.5 L4.5,5 Z" fill="#bdbdbd"/></svg>
<svg style="left:962.8px;top:460.9px" width="9.4" height="10.9" viewBox="0 0 9.4 10.9"><path d="M0,0 H9.4 V10.9 L4.7,7.7 L0,10.9 Z" fill="#1e8ef8"/></svg>
<svg style="left:1485.0px;top:462.3px" width="8" height="8"><path d="M0.5,0.5 L7.5,7.5 M7.5,0.5 L0.5,7.5" stroke="#c4c4c4" stroke-width="1.2"/></svg>
<svg style="left:1471.0px;top:464.3px" width="9" height="6"><path d="M0.5,0.8 H8.5 L4.5,5 Z" fill="#bdbdbd"/></svg>
<div class="r" style="left:39.0px;top:778.0px;width:1464.0px;height:21.0px;background:#007acc"></div>
<div class="t" style="left:44.5px;top:783.8px;font-size:10.5px;line-height:10.5px;color:#fff;">Ready</div>
<div class="r" style="left:991.3px;top:782.8px;width:12.2px;height:11.8px;background:#d23a55;border:1px solid #5a1020"></div>
<div class="t" style="left:992.3px;top:785.5px;font-size:8px;line-height:8px;color:#f0d0d8;letter-spacing:-0.3px">20</div>
<div class="r" style="left:1026.2px;top:780.4px;width:53px;height:14.8px;background:#800000;border:1px solid #3a0000"></div>
<div class="t" style="left:1033.7px;top:782.9px;font-size:11px;line-height:11px;color:#f4f4f4;letter-spacing:-0.2px">Alarm 1</div>
<div class="r" style="left:1081.4px;top:780.4px;width:53px;height:14.8px;background:#800000;border:1px solid #3a0000"></div>
<div class="t" style="left:1088.9px;top:782.9px;font-size:11px;line-height:11px;color:#f4f4f4;letter-spacing:-0.2px">Alarm 1</div>
<div class="r" style="left:1136.6px;top:780.4px;width:53px;height:14.8px;background:#800000;border:1px solid #3a0000"></div>
<div class="t" style="left:1144.1px;top:782.9px;font-size:11px;line-height:11px;color:#f4f4f4;letter-spacing:-0.2px">Alarm 1</div>
<div class="r" style="left:1191.8px;top:780.4px;width:53px;height:14.8px;background:#800000;border:1px solid #3a0000"></div>
<div class="t" style="left:1199.3px;top:782.9px;font-size:11px;line-height:11px;color:#f4f4f4;letter-spacing:-0.2px">Alarm 1</div>
<div class="r" style="left:1247.0px;top:780.4px;width:53px;height:14.8px;background:#800000;border:1px solid #3a0000"></div>
<div class="t" style="left:1254.5px;top:782.9px;font-size:11px;line-height:11px;color:#f4f4f4;letter-spacing:-0.2px">Alarm 1</div>
<div class="r" style="left:1301px;top:780.4px;width:17.3px;height:14.8px;background:#800000;border:1px solid #3a0000"></div>
<div class="t" style="left:1303.5px;top:782.9px;font-size:11px;line-height:11px;color:#f4f4f4;letter-spacing:-0.3px">21</div>
<div class="r" style="left:1339.6px;top:781.6px;width:20.2px;height:14.8px;border-radius:3px;background:#3c3c3e;border:1.3px solid #5a5a5e"></div>
<div class="t" style="left:1349.7px;top:784.4px;font-size:9px;line-height:9px;color:#808080;font-weight:normal;transform:translateX(-50%);letter-spacing:-0.4px">MSO</div>
<div class="r" style="left:1363.6px;top:781.6px;width:20.2px;height:14.8px;border-radius:3px;background:#3c3c3e;border:1.3px solid #5a5a5e"></div>
<div class="t" style="left:1373.7px;top:784.4px;font-size:9px;line-height:9px;color:#808080;font-weight:normal;transform:translateX(-50%);letter-spacing:-0.4px">FTR</div>
<div class="r" style="left:1387.6px;top:781.6px;width:20.2px;height:14.8px;border-radius:3px;background:#3c3c3e;border:1.3px solid #5a5a5e"></div>
<div class="t" style="left:1397.7px;top:784.4px;font-size:9px;line-height:9px;color:#808080;font-weight:normal;transform:translateX(-50%);letter-spacing:-0.4px">MSO</div>
<div class="r" style="left:1411.6px;top:781.6px;width:20.2px;height:14.8px;border-radius:3px;background:#3c3c3e;border:1.3px solid #5a5a5e"></div>
<div class="t" style="left:1421.7px;top:784.4px;font-size:9px;line-height:9px;color:#808080;font-weight:normal;transform:translateX(-50%);letter-spacing:-0.4px">ETN</div>
<div class="r" style="left:1435.6px;top:781.6px;width:20.2px;height:14.8px;border-radius:3px;background:#3a3a3c;border:1.3px solid #e8a020"></div>
<div class="t" style="left:1445.7px;top:784.4px;font-size:9px;line-height:9px;color:#f4f4f4;font-weight:bold;transform:translateX(-50%);letter-spacing:-0.4px">DST</div>
<div class="r" style="left:1459.6px;top:781.6px;width:20.2px;height:14.8px;border-radius:3px;background:#3c3c3e;border:1.3px solid #5a5a5e"></div>
<div class="t" style="left:1469.7px;top:784.4px;font-size:9px;line-height:9px;color:#808080;font-weight:normal;transform:translateX(-50%);letter-spacing:-0.4px">FTR</div>
<div class="r" style="left:44.4px;top:57.4px;width:138.6px;height:25.6px;border:2.85px solid #ec1c24"></div>
<div class="r" style="left:199.0px;top:57.2px;width:1266.0px;height:25.8px;border:2.85px solid #ec1c24"></div>
<div class="r" style="left:39.9px;top:85.3px;width:1464.9px;height:19.6px;border:2.85px solid #ec1c24"></div>
<div class="r" style="left:39.9px;top:110.8px;width:99.9px;height:24.0px;border:2.85px solid #ec1c24"></div>
<div class="r" style="left:107.8px;top:38.0px;width:2.5px;height:20.0px;background:#ec1c24"></div>
<div class="r" style="left:188.4px;top:36.0px;width:2.6px;height:82.5px;background:#ec1c24"></div>
<div class="r" style="left:139.8px;top:116.0px;width:51.2px;height:2.5px;background:#ec1c24"></div>
<div class="r" style="left:479.2px;top:38.0px;width:2.5px;height:20.0px;background:#ec1c24"></div>
<div class="r" style="left:841.8px;top:38.0px;width:2.6px;height:56.6px;background:#ec1c24"></div>
<div class="r" style="left:131.3px;top:790.0px;width:2.5px;height:30.5px;background:#ec1c24"></div>
<div class="r" style="left:662.2px;top:715.0px;width:2.5px;height:101.0px;background:#ec1c24"></div>
<div class="t" style="left:57.8px;top:18.1px;font-size:16px;line-height:16px;color:#111;letter-spacing:1px">Menu Bar</div>
<div class="t" style="left:174.2px;top:15.5px;font-size:16px;line-height:16px;color:#111;letter-spacing:0px">Pages</div>
<div class="t" style="left:445.9px;top:21.2px;font-size:16px;line-height:16px;color:#111;letter-spacing:0.8px">Toolbars</div>
<div class="t" style="left:809.4px;top:19.1px;font-size:16px;line-height:16px;color:#111;letter-spacing:1px">Timeline</div>
<div class="t" style="left:90.9px;top:824.9px;font-size:16px;line-height:16px;color:#111;letter-spacing:0.3px">Status Bar</div>
<div class="t" style="left:626.5px;top:821.9px;font-size:16px;line-height:16px;color:#111;letter-spacing:0.3px">Displays</div>
</body></html>
